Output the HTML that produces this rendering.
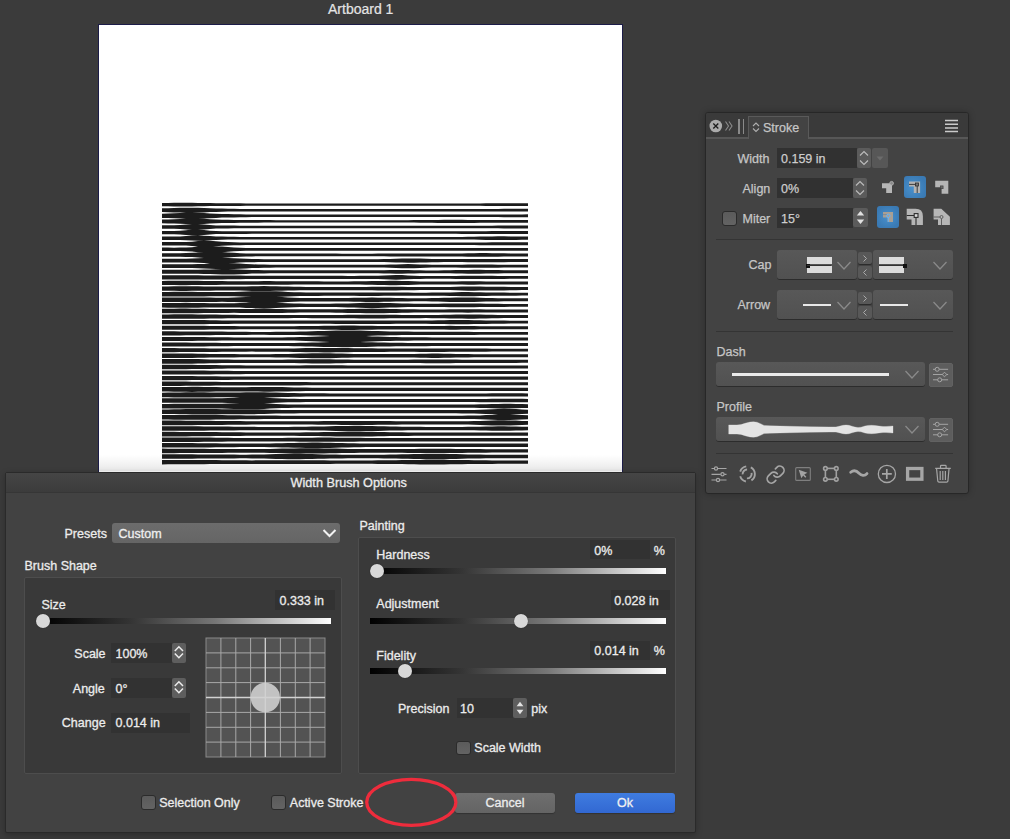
<!DOCTYPE html>
<html><head><meta charset="utf-8">
<style>
*{margin:0;padding:0;box-sizing:border-box}
html,body{width:1010px;height:839px;overflow:hidden;background:#3b3b3b;font-family:"Liberation Sans",sans-serif}
body{position:relative}
.a{position:absolute}
.t{position:absolute;white-space:nowrap;line-height:1}
.pl{font-size:12.5px;color:#c6c6c6;-webkit-text-stroke:0.25px #c6c6c6}
.dl{font-size:12.5px;color:#ececec;-webkit-text-stroke:0.3px #ececec}
.inp{position:absolute;background:#313131}
.spin{position:absolute;background:#5b5b5b;border-radius:2px}
.dd{position:absolute;background:linear-gradient(#585858,#515151);border-radius:3px;box-shadow:0 1px 0 #2c2c2c}
.sb{position:absolute;background:#585858;border-radius:2px;box-shadow:0 1px 0 #2c2c2c}
.grp{position:absolute;background:#393939;border:1px solid #4d4d4d;border-radius:2px}
.vb{position:absolute;background:#323232}
.track{position:absolute;height:6px;background:linear-gradient(90deg,#000 0%,#333 30%,#777 60%,#fff 100%)}
.thumb{position:absolute;width:14px;height:14px;border-radius:50%;background:#d8d8d8;box-shadow:0 0 1px 0 #1a1a1a}
.cb{position:absolute;width:15px;height:15px;border-radius:3px;background:linear-gradient(#5b5b5b,#636363);border:1px solid #2b2b2b}
</style></head><body>
<!-- canvas -->
<div class="t" style="left:328px;top:2px;font-size:14px;color:#e4e4e4;-webkit-text-stroke:0.2px #e4e4e4">Artboard 1</div>
<div class="a" style="left:98px;top:24px;width:525px;height:460px;background:#fff;border:1px solid #1c1c48"></div>
<svg class="a" style="left:162px;top:202px" width="367" height="264" viewBox="0 0 367 264"><path fill="#1c1c1c" d="M0 0.9 6 0.9 12 0.8 18 0.8 24 0.8 30 0.8 36 0.9 42 1.0 48 1.1 54 1.2 60 1.2 66 1.3 72 1.3 78 1.3 84 1.4 90 1.4 96 1.4 102 1.4 108 1.4 114 1.4 120 1.4 126 1.4 132 1.4 138 1.4 144 1.4 150 1.4 156 1.4 162 1.4 168 1.4 174 1.4 180 1.4 186 1.4 192 1.4 198 1.4 204 1.4 210 1.4 216 1.4 222 1.4 228 1.4 234 1.4 240 1.4 246 1.4 252 1.4 258 1.4 264 1.4 270 1.4 276 1.4 282 1.4 288 1.4 294 1.4 300 1.4 306 1.4 312 1.4 318 1.4 324 1.3 330 1.3 336 1.3 342 1.3 348 1.2 354 1.2 360 1.2 366 1.2 L366 4.0 360 4.0 354 4.0 348 4.0 342 3.9 336 3.9 330 3.9 324 3.9 318 3.8 312 3.8 306 3.8 300 3.8 294 3.8 288 3.8 282 3.8 276 3.8 270 3.8 264 3.8 258 3.8 252 3.8 246 3.8 240 3.8 234 3.8 228 3.8 222 3.8 216 3.8 210 3.8 204 3.8 198 3.8 192 3.8 186 3.8 180 3.8 174 3.8 168 3.8 162 3.8 156 3.8 150 3.8 144 3.8 138 3.8 132 3.8 126 3.8 120 3.8 114 3.8 108 3.8 102 3.8 96 3.8 90 3.8 84 3.8 78 3.9 72 3.9 66 3.9 60 4.0 54 4.0 48 4.1 42 4.2 36 4.3 30 4.4 24 4.4 18 4.4 12 4.4 6 4.3 0 4.3Z M0 6.3 6 6.2 12 6.0 18 5.8 24 5.7 30 5.7 36 5.8 42 6.0 48 6.3 54 6.5 60 6.6 66 6.7 72 6.8 78 6.9 84 6.9 90 7.0 96 7.0 102 7.0 108 7.0 114 7.0 120 7.0 126 7.0 132 7.0 138 7.0 144 7.0 150 7.0 156 7.0 162 7.0 168 7.0 174 7.0 180 7.0 186 7.0 192 7.0 198 7.0 204 7.0 210 7.0 216 7.0 222 7.0 228 7.0 234 7.0 240 7.0 246 7.0 252 7.0 258 7.0 264 7.0 270 7.0 276 7.0 282 7.0 288 7.0 294 7.0 300 7.0 306 7.0 312 7.0 318 6.9 324 6.9 330 6.9 336 6.9 342 6.8 348 6.8 354 6.8 360 6.8 366 6.7 L366 9.6 360 9.6 354 9.6 348 9.6 342 9.5 336 9.5 330 9.5 324 9.5 318 9.4 312 9.4 306 9.4 300 9.4 294 9.4 288 9.4 282 9.4 276 9.4 270 9.4 264 9.4 258 9.4 252 9.4 246 9.4 240 9.4 234 9.4 228 9.4 222 9.4 216 9.4 210 9.4 204 9.4 198 9.4 192 9.4 186 9.4 180 9.4 174 9.4 168 9.4 162 9.4 156 9.4 150 9.4 144 9.4 138 9.4 132 9.4 126 9.4 120 9.4 114 9.4 108 9.4 102 9.4 96 9.4 90 9.4 84 9.5 78 9.5 72 9.6 66 9.6 60 9.8 54 9.9 48 10.1 42 10.4 36 10.6 30 10.7 24 10.7 18 10.6 12 10.4 6 10.2 0 10.1Z M0 11.7 6 11.5 12 11.2 18 11.0 24 10.8 30 10.8 36 10.8 42 11.0 48 11.4 54 11.7 60 11.9 66 12.1 72 12.2 78 12.3 84 12.4 90 12.5 96 12.5 102 12.5 108 12.6 114 12.6 120 12.6 126 12.6 132 12.6 138 12.6 144 12.6 150 12.6 156 12.6 162 12.6 168 12.6 174 12.6 180 12.6 186 12.6 192 12.6 198 12.6 204 12.6 210 12.6 216 12.6 222 12.6 228 12.6 234 12.6 240 12.6 246 12.6 252 12.6 258 12.6 264 12.6 270 12.5 276 12.5 282 12.5 288 12.5 294 12.5 300 12.5 306 12.5 312 12.5 318 12.5 324 12.5 330 12.5 336 12.5 342 12.4 348 12.4 354 12.4 360 12.4 366 12.3 L366 15.2 360 15.2 354 15.2 348 15.2 342 15.2 336 15.1 330 15.1 324 15.1 318 15.1 312 15.1 306 15.1 300 15.1 294 15.1 288 15.1 282 15.1 276 15.1 270 15.0 264 15.0 258 15.0 252 15.0 246 15.0 240 15.0 234 15.0 228 15.0 222 15.0 216 15.0 210 15.0 204 15.0 198 15.0 192 15.0 186 15.0 180 15.0 174 15.0 168 15.0 162 15.0 156 15.0 150 15.0 144 15.0 138 15.0 132 15.0 126 15.0 120 15.0 114 15.0 108 15.0 102 15.1 96 15.1 90 15.1 84 15.2 78 15.3 72 15.4 66 15.5 60 15.6 54 15.9 48 16.2 42 16.6 36 16.8 30 16.8 24 16.8 18 16.6 12 16.3 6 16.1 0 15.9Z M0 17.5 6 17.4 12 17.3 18 17.1 24 16.7 30 16.4 36 16.4 42 16.8 48 17.3 54 17.6 60 17.7 66 17.8 72 17.9 78 18.0 84 18.1 90 18.1 96 18.1 102 18.1 108 18.1 114 18.2 120 18.2 126 18.2 132 18.2 138 18.2 144 18.2 150 18.2 156 18.2 162 18.2 168 18.2 174 18.2 180 18.2 186 18.2 192 18.2 198 18.2 204 18.2 210 18.2 216 18.2 222 18.2 228 18.2 234 18.2 240 18.2 246 18.2 252 18.1 258 18.1 264 18.1 270 18.0 276 17.9 282 17.8 288 17.8 294 17.8 300 17.8 306 17.9 312 17.9 318 18.0 324 18.0 330 18.0 336 18.0 342 18.0 348 18.0 354 18.0 360 18.0 366 17.9 L366 20.8 360 20.8 354 20.8 348 20.8 342 20.8 336 20.7 330 20.7 324 20.8 318 20.8 312 20.9 306 20.9 300 21.0 294 21.0 288 21.0 282 20.9 276 20.9 270 20.8 264 20.7 258 20.7 252 20.6 246 20.6 240 20.6 234 20.6 228 20.6 222 20.6 216 20.6 210 20.6 204 20.6 198 20.6 192 20.6 186 20.6 180 20.6 174 20.6 168 20.6 162 20.6 156 20.6 150 20.6 144 20.6 138 20.6 132 20.6 126 20.6 120 20.6 114 20.6 108 20.6 102 20.6 96 20.7 90 20.7 84 20.7 78 20.8 72 20.9 66 20.9 60 21.0 54 21.2 48 21.5 42 22.0 36 22.4 30 22.4 24 22.1 18 21.7 12 21.5 6 21.4 0 21.3Z M0 23.3 6 23.3 12 23.2 18 23.0 24 22.5 30 22.0 36 22.0 42 22.4 48 23.1 54 23.4 60 23.6 66 23.6 72 23.6 78 23.7 84 23.7 90 23.7 96 23.7 102 23.7 108 23.7 114 23.7 120 23.7 126 23.7 132 23.7 138 23.7 144 23.7 150 23.7 156 23.7 162 23.7 168 23.7 174 23.7 180 23.7 186 23.7 192 23.7 198 23.7 204 23.7 210 23.7 216 23.7 222 23.7 228 23.7 234 23.7 240 23.7 246 23.7 252 23.7 258 23.7 264 23.7 270 23.7 276 23.7 282 23.7 288 23.7 294 23.7 300 23.7 306 23.7 312 23.7 318 23.7 324 23.7 330 23.7 336 23.6 342 23.6 348 23.6 354 23.6 360 23.6 366 23.5 L366 26.4 360 26.4 354 26.4 348 26.4 342 26.4 336 26.3 330 26.3 324 26.3 318 26.3 312 26.3 306 26.3 300 26.3 294 26.3 288 26.3 282 26.3 276 26.3 270 26.3 264 26.2 258 26.2 252 26.2 246 26.2 240 26.2 234 26.2 228 26.2 222 26.2 216 26.2 210 26.2 204 26.2 198 26.2 192 26.2 186 26.2 180 26.2 174 26.2 168 26.2 162 26.2 156 26.2 150 26.2 144 26.2 138 26.2 132 26.2 126 26.2 120 26.2 114 26.2 108 26.2 102 26.2 96 26.2 90 26.2 84 26.3 78 26.3 72 26.3 66 26.4 60 26.4 54 26.6 48 26.9 42 27.6 36 28.0 30 28.0 24 27.4 18 26.9 12 26.7 6 26.7 0 26.7Z M0 28.9 6 28.9 12 28.9 18 28.7 24 28.2 30 27.6 36 27.6 42 28.0 48 28.7 54 29.0 60 29.2 66 29.2 72 29.2 78 29.3 84 29.3 90 29.3 96 29.3 102 29.3 108 29.3 114 29.3 120 29.3 126 29.3 132 29.3 138 29.3 144 29.3 150 29.3 156 29.3 162 29.3 168 29.3 174 29.3 180 29.3 186 29.3 192 29.3 198 29.3 204 29.3 210 29.3 216 29.3 222 29.3 228 29.3 234 29.3 240 29.3 246 29.3 252 29.3 258 29.3 264 29.3 270 29.3 276 29.3 282 29.3 288 29.3 294 29.3 300 29.3 306 29.3 312 29.3 318 29.2 324 29.2 330 29.1 336 29.1 342 29.1 348 29.1 354 29.1 360 29.1 366 29.1 L366 32.1 360 32.1 354 32.1 348 32.1 342 32.1 336 32.1 330 32.1 324 32.0 318 32.0 312 31.9 306 31.9 300 31.9 294 31.8 288 31.8 282 31.8 276 31.8 270 31.8 264 31.8 258 31.8 252 31.8 246 31.8 240 31.8 234 31.8 228 31.8 222 31.8 216 31.8 210 31.8 204 31.8 198 31.8 192 31.8 186 31.8 180 31.8 174 31.8 168 31.8 162 31.8 156 31.8 150 31.8 144 31.8 138 31.8 132 31.8 126 31.8 120 31.8 114 31.8 108 31.8 102 31.8 96 31.8 90 31.8 84 31.9 78 31.9 72 31.9 66 32.0 60 32.0 54 32.1 48 32.5 42 33.1 36 33.6 30 33.6 24 33.0 18 32.5 12 32.3 6 32.3 0 32.3Z M0 34.5 6 34.5 12 34.5 18 34.4 24 34.1 30 33.8 36 33.6 42 33.7 48 34.1 54 34.4 60 34.6 66 34.7 72 34.8 78 34.9 84 34.9 90 34.9 96 34.9 102 34.9 108 34.9 114 34.9 120 34.9 126 34.9 132 34.9 138 34.9 144 34.9 150 34.9 156 34.9 162 34.9 168 34.9 174 34.9 180 34.9 186 34.9 192 34.9 198 34.9 204 34.9 210 34.9 216 34.9 222 34.9 228 34.9 234 34.9 240 34.9 246 34.9 252 34.9 258 34.9 264 34.9 270 34.9 276 34.9 282 34.9 288 34.9 294 34.9 300 34.9 306 34.8 312 34.8 318 34.6 324 34.5 330 34.4 336 34.3 342 34.3 348 34.4 354 34.5 360 34.5 366 34.6 L366 37.8 360 37.8 354 37.9 348 38.0 342 38.0 336 38.0 330 38.0 324 37.9 318 37.7 312 37.6 306 37.5 300 37.5 294 37.5 288 37.5 282 37.5 276 37.5 270 37.5 264 37.5 258 37.5 252 37.5 246 37.5 240 37.5 234 37.5 228 37.5 222 37.5 216 37.5 210 37.5 204 37.5 198 37.5 192 37.5 186 37.5 180 37.5 174 37.5 168 37.5 162 37.5 156 37.5 150 37.5 144 37.5 138 37.5 132 37.5 126 37.5 120 37.5 114 37.5 108 37.5 102 37.5 96 37.5 90 37.5 84 37.5 78 37.5 72 37.6 66 37.6 60 37.7 54 38.0 48 38.3 42 38.7 36 38.8 30 38.6 24 38.2 18 38.0 12 37.9 6 37.9 0 37.9Z M0 40.0 6 40.1 12 40.1 18 40.1 24 39.9 30 39.7 36 39.1 42 38.8 48 38.8 54 39.2 60 39.8 66 40.0 72 40.2 78 40.4 84 40.4 90 40.5 96 40.5 102 40.5 108 40.5 114 40.5 120 40.5 126 40.5 132 40.5 138 40.5 144 40.5 150 40.5 156 40.5 162 40.5 168 40.5 174 40.5 180 40.5 186 40.5 192 40.5 198 40.5 204 40.5 210 40.5 216 40.5 222 40.5 228 40.5 234 40.5 240 40.5 246 40.5 252 40.5 258 40.5 264 40.5 270 40.5 276 40.5 282 40.5 288 40.5 294 40.5 300 40.5 306 40.5 312 40.5 318 40.4 324 40.4 330 40.3 336 40.3 342 40.3 348 40.3 354 40.3 360 40.3 366 40.3 L366 43.3 360 43.3 354 43.3 348 43.3 342 43.3 336 43.3 330 43.2 324 43.2 318 43.2 312 43.1 306 43.1 300 43.1 294 43.1 288 43.1 282 43.1 276 43.1 270 43.1 264 43.1 258 43.1 252 43.1 246 43.1 240 43.1 234 43.1 228 43.1 222 43.1 216 43.1 210 43.1 204 43.1 198 43.1 192 43.1 186 43.1 180 43.1 174 43.1 168 43.1 162 43.1 156 43.1 150 43.1 144 43.1 138 43.1 132 43.1 126 43.1 120 43.1 114 43.1 108 43.1 102 43.1 96 43.1 90 43.1 84 43.1 78 43.2 72 43.3 66 43.5 60 43.8 54 44.3 48 44.8 42 44.8 36 44.4 30 43.9 24 43.6 18 43.5 12 43.5 6 43.5 0 43.5Z M0 45.6 6 45.6 12 45.7 18 45.6 24 45.5 30 45.2 36 44.6 42 44.4 48 44.4 54 44.4 60 44.6 66 45.1 72 45.5 78 45.8 84 45.9 90 46.0 96 46.1 102 46.1 108 46.1 114 46.1 120 46.1 126 46.1 132 46.1 138 46.1 144 46.1 150 46.1 156 46.1 162 46.1 168 46.1 174 46.1 180 46.1 186 46.1 192 46.1 198 46.1 204 46.1 210 46.1 216 46.1 222 46.1 228 46.1 234 46.1 240 46.1 246 46.1 252 46.1 258 46.1 264 46.1 270 46.1 276 46.1 282 46.1 288 46.1 294 46.1 300 46.1 306 46.1 312 46.0 318 46.0 324 46.0 330 46.0 336 46.0 342 46.0 348 46.0 354 46.0 360 45.9 366 45.9 L366 48.8 360 48.8 354 48.8 348 48.8 342 48.8 336 48.8 330 48.8 324 48.8 318 48.8 312 48.7 306 48.7 300 48.7 294 48.7 288 48.7 282 48.7 276 48.7 270 48.7 264 48.7 258 48.7 252 48.7 246 48.7 240 48.7 234 48.7 228 48.7 222 48.7 216 48.7 210 48.7 204 48.7 198 48.7 192 48.7 186 48.7 180 48.7 174 48.7 168 48.7 162 48.7 156 48.7 150 48.7 144 48.7 138 48.7 132 48.7 126 48.7 120 48.7 114 48.7 108 48.7 102 48.7 96 48.7 90 48.7 84 48.8 78 49.0 72 49.3 66 49.7 60 50.2 54 50.4 48 50.4 42 50.4 36 50.2 30 49.6 24 49.2 18 49.1 12 49.1 6 49.1 0 49.1Z M0 51.2 6 51.2 12 51.2 18 51.2 24 51.1 30 50.8 36 50.4 42 50.0 48 50.0 54 50.0 60 50.0 66 50.4 72 50.8 78 51.2 84 51.4 90 51.6 96 51.6 102 51.6 108 51.6 114 51.6 120 51.6 126 51.6 132 51.6 138 51.6 144 51.6 150 51.6 156 51.6 162 51.6 168 51.6 174 51.6 180 51.7 186 51.7 192 51.7 198 51.7 204 51.7 210 51.7 216 51.6 222 51.6 228 51.6 234 51.5 240 51.5 246 51.5 252 51.4 258 51.5 264 51.5 270 51.5 276 51.6 282 51.6 288 51.5 294 51.5 300 51.4 306 51.3 312 51.2 318 51.1 324 51.1 330 51.2 336 51.3 342 51.3 348 51.4 354 51.5 360 51.5 366 51.5 L366 54.5 360 54.5 354 54.5 348 54.5 342 54.6 336 54.7 330 54.8 324 54.8 318 54.8 312 54.8 306 54.7 300 54.6 294 54.5 288 54.4 282 54.4 276 54.4 270 54.4 264 54.5 258 54.5 252 54.5 246 54.5 240 54.5 234 54.4 228 54.4 222 54.3 216 54.3 210 54.3 204 54.3 198 54.3 192 54.3 186 54.3 180 54.3 174 54.3 168 54.3 162 54.3 156 54.3 150 54.3 144 54.3 138 54.3 132 54.3 126 54.3 120 54.3 114 54.3 108 54.3 102 54.3 96 54.3 90 54.4 84 54.5 78 54.8 72 55.1 66 55.6 60 56.0 54 56.0 48 56.0 42 56.0 36 55.6 30 55.1 24 54.9 18 54.8 12 54.8 6 54.8 0 54.8Z M0 56.7 6 56.8 12 56.8 18 56.7 24 56.7 30 56.6 36 56.3 42 56.1 48 55.8 54 55.7 60 55.8 66 56.0 72 56.3 78 56.6 84 56.8 90 57.0 96 57.1 102 57.2 108 57.2 114 57.2 120 57.2 126 57.2 132 57.2 138 57.2 144 57.2 150 57.2 156 57.2 162 57.2 168 57.2 174 57.2 180 57.2 186 57.2 192 57.2 198 57.2 204 57.2 210 57.2 216 57.2 222 57.1 228 57.0 234 56.8 240 56.5 246 56.4 252 56.4 258 56.5 264 56.7 270 56.9 276 57.0 282 57.1 288 57.1 294 57.1 300 57.0 306 57.0 312 56.9 318 56.9 324 56.9 330 56.9 336 56.9 342 57.0 348 57.1 354 57.1 360 57.1 366 57.1 L366 60.1 360 60.1 354 60.1 348 60.1 342 60.2 336 60.2 330 60.3 324 60.3 318 60.3 312 60.2 306 60.2 300 60.1 294 60.1 288 60.1 282 60.1 276 60.2 270 60.3 264 60.5 258 60.6 252 60.7 246 60.8 240 60.6 234 60.4 228 60.2 222 60.1 216 60.0 210 60.0 204 59.9 198 59.9 192 59.9 186 59.9 180 59.9 174 60.0 168 60.0 162 60.0 156 60.0 150 60.0 144 60.0 138 60.0 132 60.0 126 60.0 120 60.0 114 60.0 108 60.0 102 60.0 96 60.1 90 60.2 84 60.3 78 60.6 72 60.9 66 61.2 60 61.4 54 61.5 48 61.4 42 61.1 36 60.8 30 60.6 24 60.5 18 60.4 12 60.4 6 60.4 0 60.4Z M0 62.3 6 62.3 12 62.3 18 62.3 24 62.3 30 62.2 36 62.1 42 61.9 48 61.6 54 61.4 60 61.2 66 61.2 72 61.3 78 61.6 84 61.9 90 62.3 96 62.5 102 62.6 108 62.7 114 62.7 120 62.7 126 62.7 132 62.7 138 62.7 144 62.7 150 62.7 156 62.7 162 62.7 168 62.8 174 62.8 180 62.8 186 62.8 192 62.8 198 62.8 204 62.8 210 62.8 216 62.8 222 62.7 228 62.6 234 62.4 240 62.2 246 62.1 252 62.2 258 62.4 264 62.6 270 62.7 276 62.8 282 62.8 288 62.7 294 62.7 300 62.7 306 62.6 312 62.6 318 62.6 324 62.6 330 62.6 336 62.7 342 62.7 348 62.7 354 62.7 360 62.7 366 62.7 L366 65.6 360 65.6 354 65.6 348 65.6 342 65.6 336 65.7 330 65.7 324 65.7 318 65.8 312 65.8 306 65.7 300 65.7 294 65.6 288 65.6 282 65.6 276 65.6 270 65.6 264 65.7 258 65.9 252 66.2 246 66.3 240 66.2 234 66.0 228 65.7 222 65.6 216 65.6 210 65.6 204 65.6 198 65.6 192 65.6 186 65.6 180 65.6 174 65.6 168 65.6 162 65.6 156 65.6 150 65.6 144 65.6 138 65.6 132 65.6 126 65.6 120 65.6 114 65.6 108 65.7 102 65.7 96 65.9 90 66.1 84 66.4 78 66.8 72 67.1 66 67.2 60 67.2 54 67.0 48 66.7 42 66.4 36 66.3 30 66.1 24 66.1 18 66.1 12 66.1 6 66.1 0 66.1Z M0 67.8 6 67.8 12 67.8 18 67.8 24 67.8 30 67.8 36 67.7 42 67.6 48 67.5 54 67.3 60 67.1 66 67.1 72 67.2 78 67.4 84 67.7 90 67.9 96 68.1 102 68.2 108 68.2 114 68.3 120 68.3 126 68.3 132 68.3 138 68.3 144 68.3 150 68.3 156 68.3 162 68.3 168 68.3 174 68.3 180 68.3 186 68.3 192 68.3 198 68.3 204 68.3 210 68.3 216 68.3 222 68.2 228 68.0 234 67.9 240 67.9 246 68.0 252 68.2 258 68.3 264 68.4 270 68.4 276 68.4 282 68.3 288 68.2 294 68.1 300 68.0 306 67.9 312 67.8 318 67.8 324 67.9 330 68.0 336 68.1 342 68.2 348 68.3 354 68.3 360 68.3 366 68.3 L366 71.2 360 71.2 354 71.2 348 71.3 342 71.3 336 71.4 330 71.5 324 71.6 318 71.7 312 71.7 306 71.7 300 71.6 294 71.4 288 71.3 282 71.2 276 71.2 270 71.2 264 71.2 258 71.2 252 71.4 246 71.5 240 71.7 234 71.7 228 71.5 222 71.4 216 71.3 210 71.2 204 71.2 198 71.2 192 71.2 186 71.2 180 71.2 174 71.3 168 71.3 162 71.3 156 71.3 150 71.3 144 71.3 138 71.3 132 71.3 126 71.3 120 71.3 114 71.3 108 71.3 102 71.4 96 71.5 90 71.6 84 71.9 78 72.2 72 72.4 66 72.5 60 72.4 54 72.2 48 72.1 42 71.9 36 71.8 30 71.8 24 71.7 18 71.7 12 71.7 6 71.7 0 71.7Z M0 73.3 6 73.3 12 73.3 18 73.3 24 73.3 30 73.3 36 73.3 42 73.4 48 73.4 54 73.4 60 73.4 66 73.4 72 73.5 78 73.6 84 73.7 90 73.7 96 73.7 102 73.8 108 73.8 114 73.8 120 73.8 126 73.8 132 73.8 138 73.8 144 73.8 150 73.8 156 73.8 162 73.8 168 73.8 174 73.8 180 73.8 186 73.9 192 73.9 198 73.8 204 73.8 210 73.8 216 73.7 222 73.5 228 73.2 234 73.1 240 73.1 246 73.4 252 73.7 258 73.9 264 74.0 270 74.0 276 74.0 282 74.0 288 73.9 294 73.9 300 73.8 306 73.7 312 73.7 318 73.7 324 73.8 330 73.8 336 73.9 342 73.9 348 73.9 354 73.9 360 73.9 366 73.9 L366 76.8 360 76.8 354 76.8 348 76.8 342 76.9 336 76.9 330 76.9 324 77.0 318 77.0 312 77.0 306 77.0 300 76.9 294 76.9 288 76.8 282 76.8 276 76.8 270 76.8 264 76.8 258 76.9 252 77.0 246 77.3 240 77.6 234 77.7 228 77.5 222 77.2 216 77.1 210 77.0 204 76.9 198 76.9 192 76.9 186 76.9 180 76.9 174 76.9 168 76.9 162 76.9 156 76.9 150 76.9 144 77.0 138 77.0 132 77.0 126 77.0 120 77.0 114 77.0 108 77.0 102 77.0 96 77.0 90 77.0 84 77.1 78 77.2 72 77.3 66 77.3 60 77.4 54 77.4 48 77.4 42 77.4 36 77.4 30 77.4 24 77.4 18 77.4 12 77.4 6 77.4 0 77.4Z M0 78.9 6 78.8 12 78.8 18 78.8 24 78.8 30 78.8 36 78.8 42 78.9 48 79.0 54 79.0 60 79.1 66 79.2 72 79.2 78 79.2 84 79.2 90 79.2 96 79.2 102 79.1 108 79.1 114 79.2 120 79.2 126 79.3 132 79.3 138 79.3 144 79.3 150 79.3 156 79.3 162 79.4 168 79.4 174 79.4 180 79.4 186 79.4 192 79.3 198 79.3 204 79.2 210 79.1 216 79.0 222 78.9 228 78.8 234 78.8 240 78.9 246 79.1 252 79.2 258 79.4 264 79.5 270 79.5 276 79.6 282 79.6 288 79.5 294 79.4 300 79.3 306 79.2 312 79.2 318 79.3 324 79.4 330 79.4 336 79.4 342 79.4 348 79.4 354 79.5 360 79.5 366 79.5 L366 82.4 360 82.4 354 82.5 348 82.5 342 82.5 336 82.6 330 82.6 324 82.6 318 82.6 312 82.7 306 82.7 300 82.6 294 82.5 288 82.4 282 82.4 276 82.4 270 82.4 264 82.5 258 82.6 252 82.7 246 82.9 240 83.1 234 83.2 228 83.2 222 83.1 216 82.9 210 82.8 204 82.7 198 82.6 192 82.6 186 82.6 180 82.6 174 82.6 168 82.6 162 82.6 156 82.6 150 82.6 144 82.6 138 82.6 132 82.6 126 82.7 120 82.7 114 82.8 108 82.8 102 82.8 96 82.8 90 82.8 84 82.7 78 82.7 72 82.8 66 82.8 60 82.8 54 82.9 48 83.0 42 83.0 36 83.1 30 83.1 24 83.2 18 83.2 12 83.1 6 83.1 0 83.1Z M0 84.4 6 84.4 12 84.3 18 84.3 24 84.3 30 84.3 36 84.3 42 84.4 48 84.5 54 84.5 60 84.6 66 84.6 72 84.6 78 84.5 84 84.4 90 84.3 96 84.2 102 84.1 108 84.2 114 84.3 120 84.5 126 84.6 132 84.7 138 84.8 144 84.9 150 84.9 156 84.9 162 84.9 168 84.9 174 84.9 180 84.9 186 84.9 192 84.9 198 84.9 204 84.9 210 84.8 216 84.8 222 84.7 228 84.7 234 84.8 240 84.8 246 84.9 252 85.0 258 85.0 264 85.1 270 85.1 276 85.1 282 85.1 288 85.0 294 84.8 300 84.5 306 84.4 312 84.4 318 84.6 324 84.7 330 84.7 336 84.7 342 84.8 348 84.9 354 85.0 360 85.0 366 85.1 L366 88.1 360 88.1 354 88.2 348 88.3 342 88.4 336 88.4 330 88.5 324 88.5 318 88.6 312 88.7 306 88.8 300 88.6 294 88.3 288 88.1 282 88.0 276 88.0 270 88.0 264 88.0 258 88.1 252 88.2 246 88.2 240 88.3 234 88.4 228 88.4 222 88.4 216 88.4 210 88.3 204 88.3 198 88.2 192 88.2 186 88.2 180 88.2 174 88.2 168 88.2 162 88.2 156 88.2 150 88.3 144 88.3 138 88.3 132 88.4 126 88.5 120 88.7 114 88.8 108 89.0 102 89.0 96 89.0 90 88.9 84 88.7 78 88.6 72 88.5 66 88.5 60 88.5 54 88.6 48 88.7 42 88.7 36 88.8 30 88.8 24 88.9 18 88.9 12 88.8 6 88.8 0 88.7Z M0 89.9 6 89.9 12 89.8 18 89.8 24 89.8 30 89.8 36 89.9 42 89.9 48 90.0 54 90.1 60 90.1 66 90.1 72 90.0 78 89.8 84 89.5 90 89.2 96 89.2 102 89.2 108 89.2 114 89.3 120 89.6 126 89.9 132 90.2 138 90.3 144 90.4 150 90.5 156 90.5 162 90.5 168 90.5 174 90.5 180 90.5 186 90.5 192 90.5 198 90.5 204 90.5 210 90.5 216 90.5 222 90.5 228 90.5 234 90.6 240 90.6 246 90.6 252 90.7 258 90.7 264 90.7 270 90.6 276 90.6 282 90.5 288 90.4 294 90.2 300 90.1 306 90.1 312 90.2 318 90.3 324 90.4 330 90.5 336 90.6 342 90.6 348 90.7 354 90.7 360 90.7 366 90.7 L366 93.6 360 93.6 354 93.7 348 93.7 342 93.7 336 93.8 330 93.8 324 93.9 318 94.0 312 94.2 306 94.3 300 94.2 294 94.1 288 94.0 282 93.8 276 93.8 270 93.7 264 93.7 258 93.7 252 93.7 246 93.7 240 93.7 234 93.8 228 93.8 222 93.8 216 93.9 210 93.9 204 93.9 198 93.9 192 93.8 186 93.8 180 93.8 174 93.8 168 93.8 162 93.8 156 93.9 150 93.9 144 93.9 138 94.0 132 94.2 126 94.4 120 94.7 114 95.1 108 95.2 102 95.2 96 95.2 90 95.1 84 94.8 78 94.5 72 94.3 66 94.2 60 94.2 54 94.3 48 94.3 42 94.4 36 94.5 30 94.5 24 94.5 18 94.5 12 94.5 6 94.4 0 94.4Z M0 95.5 6 95.5 12 95.4 18 95.4 24 95.4 30 95.4 36 95.4 42 95.5 48 95.6 54 95.7 60 95.7 66 95.7 72 95.5 78 95.3 84 94.9 90 94.8 96 94.8 102 94.8 108 94.8 114 94.8 120 95.1 126 95.4 132 95.7 138 95.9 144 96.0 150 96.1 156 96.1 162 96.1 168 96.1 174 96.0 180 96.0 186 95.9 192 95.8 198 95.7 204 95.7 210 95.6 216 95.7 222 95.7 228 95.8 234 96.0 240 96.1 246 96.2 252 96.2 258 96.2 264 96.2 270 96.1 276 96.0 282 95.8 288 95.7 294 95.5 300 95.4 306 95.5 312 95.6 318 95.7 324 95.9 330 96.1 336 96.2 342 96.2 348 96.3 354 96.3 360 96.3 366 96.3 L366 99.2 360 99.2 354 99.2 348 99.2 342 99.3 336 99.4 330 99.5 324 99.6 318 99.8 312 100.0 306 100.1 300 100.1 294 100.0 288 99.9 282 99.7 276 99.5 270 99.4 264 99.3 258 99.3 252 99.3 246 99.4 240 99.5 234 99.6 228 99.7 222 99.8 216 99.9 210 99.9 204 99.9 198 99.8 192 99.7 186 99.6 180 99.5 174 99.5 168 99.5 162 99.5 156 99.5 150 99.5 144 99.5 138 99.6 132 99.8 126 100.1 120 100.5 114 100.8 108 100.8 102 100.8 96 100.8 90 100.8 84 100.6 78 100.3 72 100.0 66 99.9 60 99.8 54 99.9 48 99.9 42 100.0 36 100.1 30 100.1 24 100.2 18 100.1 12 100.1 6 100.1 0 100.0Z M0 101.1 6 101.1 12 101.0 18 101.0 24 101.0 30 101.0 36 101.1 42 101.1 48 101.2 54 101.3 60 101.3 66 101.3 72 101.3 78 101.1 84 100.9 90 100.6 96 100.4 102 100.4 108 100.5 114 100.7 120 101.0 126 101.3 132 101.5 138 101.6 144 101.7 150 101.7 156 101.7 162 101.7 168 101.7 174 101.6 180 101.5 186 101.4 192 101.2 198 101.0 204 100.8 210 100.8 216 100.8 222 100.9 228 101.1 234 101.3 240 101.5 246 101.6 252 101.7 258 101.8 264 101.8 270 101.8 276 101.7 282 101.6 288 101.5 294 101.5 300 101.4 306 101.4 312 101.5 318 101.6 324 101.7 330 101.8 336 101.8 342 101.9 348 101.9 354 101.9 360 101.9 366 101.9 L366 104.8 360 104.8 354 104.8 348 104.8 342 104.9 336 104.9 330 105.0 324 105.0 318 105.1 312 105.2 306 105.3 300 105.3 294 105.3 288 105.2 282 105.1 276 105.0 270 105.0 264 104.9 258 104.9 252 105.0 246 105.1 240 105.2 234 105.4 228 105.6 222 105.8 216 105.9 210 106.0 204 105.9 198 105.7 192 105.6 186 105.4 180 105.2 174 105.1 168 105.1 162 105.0 156 105.0 150 105.0 144 105.1 138 105.1 132 105.3 126 105.5 120 105.7 114 106.0 108 106.3 102 106.4 96 106.3 90 106.1 84 105.9 78 105.6 72 105.5 66 105.4 60 105.4 54 105.4 48 105.5 42 105.6 36 105.7 30 105.7 24 105.7 18 105.7 12 105.7 6 105.7 0 105.6Z M0 106.7 6 106.7 12 106.7 18 106.6 24 106.6 30 106.7 36 106.7 42 106.8 48 106.9 54 106.9 60 107.0 66 107.1 72 107.1 78 107.1 84 107.0 90 106.9 96 106.8 102 106.8 108 106.8 114 106.9 120 107.1 126 107.2 132 107.3 138 107.3 144 107.3 150 107.3 156 107.3 162 107.3 168 107.3 174 107.2 180 107.2 186 107.1 192 106.9 198 106.8 204 106.7 210 106.6 216 106.7 222 106.8 228 106.9 234 107.0 240 107.2 246 107.3 252 107.3 258 107.4 264 107.4 270 107.4 276 107.4 282 107.4 288 107.3 294 107.3 300 107.3 306 107.3 312 107.3 318 107.3 324 107.4 330 107.4 336 107.5 342 107.5 348 107.5 354 107.5 360 107.5 366 107.5 L366 110.4 360 110.4 354 110.4 348 110.4 342 110.4 336 110.5 330 110.5 324 110.6 318 110.6 312 110.6 306 110.7 300 110.6 294 110.6 288 110.6 282 110.5 276 110.5 270 110.5 264 110.5 258 110.5 252 110.6 246 110.7 240 110.8 234 110.9 228 111.0 222 111.2 216 111.3 210 111.3 204 111.2 198 111.1 192 111.0 186 110.9 180 110.8 174 110.7 168 110.6 162 110.6 156 110.6 150 110.6 144 110.6 138 110.6 132 110.7 126 110.8 120 110.9 114 111.0 108 111.1 102 111.1 96 111.1 90 111.0 84 110.9 78 110.9 72 110.8 66 110.9 60 110.9 54 111.0 48 111.1 42 111.1 36 111.2 30 111.3 24 111.3 18 111.3 12 111.3 6 111.2 0 111.2Z M0 112.4 6 112.4 12 112.3 18 112.3 24 112.3 30 112.3 36 112.4 42 112.5 48 112.5 54 112.6 60 112.7 66 112.8 72 112.8 78 112.9 84 112.9 90 112.9 96 112.9 102 112.9 108 112.9 114 112.9 120 112.9 126 113.0 132 113.0 138 113.0 144 113.0 150 113.0 156 113.0 162 112.9 168 112.9 174 112.9 180 112.9 186 112.8 192 112.8 198 112.8 204 112.7 210 112.7 216 112.7 222 112.8 228 112.8 234 112.8 240 112.9 246 112.9 252 112.9 258 113.0 264 113.0 270 113.0 276 112.9 282 112.8 288 112.7 294 112.6 300 112.5 306 112.4 312 112.5 318 112.5 324 112.7 330 112.8 336 112.9 342 113.0 348 113.1 354 113.1 360 113.1 366 113.1 L366 116.0 360 116.0 354 116.0 348 116.1 342 116.1 336 116.2 330 116.3 324 116.4 318 116.6 312 116.7 306 116.7 300 116.6 294 116.5 288 116.4 282 116.3 276 116.2 270 116.2 264 116.1 258 116.2 252 116.2 246 116.2 240 116.2 234 116.3 228 116.3 222 116.4 216 116.4 210 116.4 204 116.4 198 116.4 192 116.3 186 116.3 180 116.2 174 116.2 168 116.2 162 116.2 156 116.2 150 116.2 144 116.1 138 116.1 132 116.1 126 116.2 120 116.2 114 116.2 108 116.2 102 116.2 96 116.2 90 116.2 84 116.2 78 116.3 72 116.3 66 116.3 60 116.4 54 116.5 48 116.6 42 116.7 36 116.7 30 116.8 24 116.8 18 116.8 12 116.8 6 116.8 0 116.7Z M0 118.0 6 118.0 12 118.0 18 118.0 24 118.0 30 118.0 36 118.1 42 118.1 48 118.2 54 118.3 60 118.4 66 118.4 72 118.5 78 118.6 84 118.6 90 118.6 96 118.6 102 118.6 108 118.6 114 118.6 120 118.6 126 118.6 132 118.6 138 118.6 144 118.6 150 118.6 156 118.5 162 118.5 168 118.5 174 118.5 180 118.4 186 118.4 192 118.4 198 118.4 204 118.4 210 118.4 216 118.4 222 118.4 228 118.5 234 118.5 240 118.5 246 118.5 252 118.5 258 118.5 264 118.5 270 118.5 276 118.3 282 118.2 288 118.1 294 118.0 300 118.0 306 118.1 312 118.2 318 118.3 324 118.4 330 118.5 336 118.6 342 118.6 348 118.7 354 118.7 360 118.7 366 118.7 L366 121.6 360 121.6 354 121.6 348 121.6 342 121.7 336 121.7 330 121.8 324 121.9 318 122.0 312 122.1 306 122.2 300 122.3 294 122.3 288 122.2 282 122.1 276 122.0 270 121.9 264 121.8 258 121.8 252 121.8 246 121.8 240 121.8 234 121.8 228 121.9 222 121.9 216 121.9 210 121.9 204 121.9 198 121.9 192 121.9 186 121.9 180 121.9 174 121.9 168 121.8 162 121.8 156 121.8 150 121.8 144 121.7 138 121.7 132 121.7 126 121.7 120 121.7 114 121.7 108 121.7 102 121.7 96 121.7 90 121.7 84 121.7 78 121.8 72 121.8 66 121.9 60 122.0 54 122.0 48 122.1 42 122.2 36 122.2 30 122.3 24 122.3 18 122.3 12 122.3 6 122.3 0 122.3Z M0 123.7 6 123.7 12 123.7 18 123.7 24 123.7 30 123.7 36 123.8 42 123.8 48 123.9 54 123.9 60 124.0 66 124.1 72 124.1 78 124.2 84 124.2 90 124.3 96 124.3 102 124.3 108 124.3 114 124.2 120 124.2 126 124.2 132 124.2 138 124.1 144 124.1 150 124.0 156 123.9 162 123.8 168 123.8 174 123.7 180 123.6 186 123.6 192 123.6 198 123.7 204 123.7 210 123.8 216 123.9 222 123.9 228 124.0 234 124.0 240 124.1 246 124.1 252 124.1 258 124.1 264 124.1 270 124.1 276 124.0 282 123.9 288 123.8 294 123.9 300 123.9 306 124.0 312 124.1 318 124.2 324 124.2 330 124.3 336 124.3 342 124.3 348 124.3 354 124.3 360 124.3 366 124.3 L366 127.2 360 127.2 354 127.2 348 127.2 342 127.2 336 127.2 330 127.2 324 127.3 318 127.3 312 127.4 306 127.5 300 127.6 294 127.7 288 127.7 282 127.6 276 127.5 270 127.5 264 127.4 258 127.4 252 127.4 246 127.4 240 127.5 234 127.5 228 127.5 222 127.6 216 127.6 210 127.7 204 127.8 198 127.8 192 127.9 186 127.9 180 127.9 174 127.8 168 127.8 162 127.7 156 127.6 150 127.5 144 127.4 138 127.4 132 127.3 126 127.3 120 127.3 114 127.3 108 127.3 102 127.2 96 127.2 90 127.3 84 127.3 78 127.3 72 127.4 66 127.4 60 127.5 54 127.6 48 127.6 42 127.7 36 127.7 30 127.8 24 127.8 18 127.8 12 127.8 6 127.8 0 127.8Z M0 129.3 6 129.3 12 129.3 18 129.4 24 129.4 30 129.4 36 129.4 42 129.5 48 129.5 54 129.6 60 129.6 66 129.7 72 129.7 78 129.8 84 129.8 90 129.9 96 129.9 102 129.9 108 129.9 114 129.8 120 129.8 126 129.8 132 129.7 138 129.6 144 129.5 150 129.3 156 129.1 162 128.9 168 128.7 174 128.5 180 128.4 186 128.4 192 128.5 198 128.6 204 128.8 210 129.0 216 129.1 222 129.3 228 129.4 234 129.5 240 129.6 246 129.6 252 129.7 258 129.7 264 129.7 270 129.8 276 129.8 282 129.8 288 129.8 294 129.8 300 129.8 306 129.8 312 129.9 318 129.9 324 129.9 330 129.9 336 129.9 342 129.9 348 129.9 354 129.9 360 129.9 366 129.9 L366 132.8 360 132.8 354 132.8 348 132.8 342 132.8 336 132.8 330 132.8 324 132.8 318 132.8 312 132.9 306 132.9 300 132.9 294 132.9 288 132.9 282 132.9 276 132.9 270 133.0 264 133.0 258 133.0 252 133.0 246 133.1 240 133.1 234 133.2 228 133.3 222 133.4 216 133.6 210 133.7 204 133.9 198 134.1 192 134.2 186 134.3 180 134.3 174 134.2 168 134.0 162 133.8 156 133.6 150 133.4 144 133.2 138 133.1 132 133.0 126 132.9 120 132.9 114 132.9 108 132.9 102 132.8 96 132.8 90 132.8 84 132.9 78 132.9 72 133.0 66 133.0 60 133.1 54 133.1 48 133.2 42 133.2 36 133.3 30 133.3 24 133.3 18 133.4 12 133.4 6 133.4 0 133.4Z M0 135.0 6 135.0 12 135.0 18 135.0 24 135.0 30 135.1 36 135.1 42 135.1 48 135.2 54 135.2 60 135.3 66 135.3 72 135.4 78 135.4 84 135.4 90 135.5 96 135.5 102 135.5 108 135.5 114 135.4 120 135.4 126 135.3 132 135.3 138 135.1 144 135.0 150 134.7 156 134.5 162 134.2 168 134.0 174 134.0 180 134.0 186 134.0 192 134.0 198 134.0 204 134.1 210 134.4 216 134.6 222 134.8 228 135.0 234 135.1 240 135.2 246 135.2 252 135.3 258 135.3 264 135.3 270 135.4 276 135.4 282 135.4 288 135.4 294 135.4 300 135.4 306 135.4 312 135.5 318 135.5 324 135.5 330 135.5 336 135.5 342 135.5 348 135.5 354 135.5 360 135.5 366 135.5 L366 138.4 360 138.4 354 138.4 348 138.4 342 138.4 336 138.4 330 138.4 324 138.4 318 138.4 312 138.5 306 138.5 300 138.5 294 138.5 288 138.5 282 138.5 276 138.5 270 138.5 264 138.6 258 138.6 252 138.6 246 138.7 240 138.7 234 138.8 228 138.9 222 139.1 216 139.3 210 139.5 204 139.8 198 140.0 192 140.0 186 140.0 180 140.0 174 140.0 168 139.9 162 139.7 156 139.4 150 139.2 144 138.9 138 138.8 132 138.6 126 138.6 120 138.5 114 138.5 108 138.5 102 138.4 96 138.4 90 138.4 84 138.5 78 138.5 72 138.5 66 138.6 60 138.6 54 138.7 48 138.7 42 138.8 36 138.8 30 138.9 24 138.9 18 138.9 12 138.9 6 138.9 0 139.0Z M0 140.6 6 140.6 12 140.6 18 140.6 24 140.6 30 140.7 36 140.7 42 140.7 48 140.8 54 140.8 60 140.9 66 140.9 72 141.0 78 141.0 84 141.0 90 141.1 96 141.1 102 141.1 108 141.0 114 141.0 120 141.0 126 141.0 132 140.9 138 140.8 144 140.7 150 140.5 156 140.4 162 140.2 168 140.1 174 140.0 180 139.9 186 139.9 192 140.0 198 140.1 204 140.2 210 140.3 216 140.5 222 140.6 228 140.7 234 140.8 240 140.8 246 140.9 252 140.9 258 140.9 264 140.9 270 141.0 276 141.0 282 141.0 288 141.0 294 141.0 300 141.0 306 141.0 312 141.0 318 141.1 324 141.1 330 141.1 336 141.1 342 141.1 348 141.1 354 141.1 360 141.1 366 141.1 L366 144.0 360 144.0 354 144.0 348 144.0 342 144.0 336 144.0 330 144.0 324 144.0 318 144.0 312 144.1 306 144.1 300 144.1 294 144.1 288 144.1 282 144.1 276 144.1 270 144.1 264 144.2 258 144.2 252 144.2 246 144.2 240 144.3 234 144.3 228 144.4 222 144.5 216 144.6 210 144.8 204 144.9 198 145.0 192 145.1 186 145.2 180 145.2 174 145.1 168 145.0 162 144.9 156 144.7 150 144.6 144 144.4 138 144.3 132 144.2 126 144.1 120 144.1 114 144.1 108 144.1 102 144.0 96 144.0 90 144.0 84 144.1 78 144.1 72 144.1 66 144.2 60 144.2 54 144.3 48 144.3 42 144.4 36 144.4 30 144.4 24 144.5 18 144.5 12 144.5 6 144.5 0 144.5Z M0 146.1 6 146.1 12 146.1 18 146.2 24 146.2 30 146.2 36 146.3 42 146.3 48 146.4 54 146.4 60 146.5 66 146.5 72 146.5 78 146.6 84 146.6 90 146.6 96 146.6 102 146.6 108 146.6 114 146.6 120 146.5 126 146.5 132 146.4 138 146.2 144 146.1 150 146.0 156 145.9 162 145.9 168 145.9 174 146.0 180 146.0 186 146.1 192 146.2 198 146.2 204 146.3 210 146.3 216 146.4 222 146.4 228 146.5 234 146.5 240 146.5 246 146.5 252 146.5 258 146.4 264 146.4 270 146.4 276 146.4 282 146.4 288 146.5 294 146.5 300 146.6 306 146.6 312 146.6 318 146.6 324 146.6 330 146.7 336 146.7 342 146.7 348 146.7 354 146.7 360 146.7 366 146.7 L366 149.6 360 149.6 354 149.6 348 149.6 342 149.6 336 149.6 330 149.6 324 149.7 318 149.7 312 149.7 306 149.7 300 149.7 294 149.8 288 149.8 282 149.9 276 149.9 270 149.9 264 149.9 258 149.9 252 149.8 246 149.8 240 149.8 234 149.8 228 149.8 222 149.9 216 149.9 210 149.9 204 150.0 198 150.1 192 150.1 186 150.2 180 150.3 174 150.3 168 150.4 162 150.4 156 150.3 150 150.3 144 150.2 138 150.1 132 149.9 126 149.8 120 149.8 114 149.7 108 149.7 102 149.7 96 149.7 90 149.6 84 149.7 78 149.7 72 149.7 66 149.8 60 149.8 54 149.9 48 149.9 42 150.0 36 150.0 30 150.1 24 150.1 18 150.1 12 150.2 6 150.2 0 150.2Z M0 151.5 6 151.5 12 151.5 18 151.5 24 151.5 30 151.6 36 151.7 42 151.8 48 151.9 54 151.9 60 152.0 66 152.1 72 152.1 78 152.2 84 152.2 90 152.2 96 152.2 102 152.2 108 152.2 114 152.1 120 152.0 126 151.9 132 151.7 138 151.6 144 151.4 150 151.2 156 151.2 162 151.2 168 151.3 174 151.5 180 151.6 186 151.8 192 151.9 198 152.0 204 152.1 210 152.1 216 152.1 222 152.1 228 152.1 234 152.1 240 152.0 246 152.0 252 151.9 258 151.8 264 151.7 270 151.6 276 151.6 282 151.7 288 151.8 294 151.9 300 152.0 306 152.1 312 152.2 318 152.2 324 152.2 330 152.2 336 152.2 342 152.2 348 152.2 354 152.2 360 152.3 366 152.3 L366 155.2 360 155.2 354 155.2 348 155.2 342 155.2 336 155.2 330 155.3 324 155.3 318 155.3 312 155.3 306 155.4 300 155.5 294 155.6 288 155.7 282 155.8 276 155.9 270 155.9 264 155.8 258 155.7 252 155.6 246 155.5 240 155.4 234 155.4 228 155.4 222 155.4 216 155.4 210 155.4 204 155.4 198 155.5 192 155.6 186 155.7 180 155.8 174 156.0 168 156.2 162 156.3 156 156.3 150 156.3 144 156.1 138 155.9 132 155.7 126 155.6 120 155.4 114 155.4 108 155.3 102 155.3 96 155.3 90 155.3 84 155.3 78 155.3 72 155.4 66 155.4 60 155.5 54 155.5 48 155.6 42 155.7 36 155.8 30 155.9 24 156.0 18 156.0 12 156.0 6 156.0 0 156.0Z M0 157.0 6 156.9 12 156.9 18 156.9 24 156.9 30 157.0 36 157.1 42 157.3 48 157.4 54 157.5 60 157.6 66 157.6 72 157.7 78 157.8 84 157.8 90 157.8 96 157.8 102 157.8 108 157.8 114 157.8 120 157.7 126 157.6 132 157.6 138 157.4 144 157.3 150 157.3 156 157.2 162 157.3 168 157.3 174 157.4 180 157.5 186 157.6 192 157.7 198 157.7 204 157.7 210 157.7 216 157.7 222 157.7 228 157.7 234 157.7 240 157.7 246 157.7 252 157.6 258 157.5 264 157.5 270 157.4 276 157.4 282 157.5 288 157.5 294 157.6 300 157.7 306 157.7 312 157.8 318 157.8 324 157.8 330 157.8 336 157.8 342 157.8 348 157.8 354 157.8 360 157.8 366 157.8 L366 160.8 360 160.8 354 160.9 348 160.9 342 160.9 336 160.9 330 160.9 324 160.9 318 160.9 312 160.9 306 161.0 300 161.0 294 161.1 288 161.2 282 161.2 276 161.2 270 161.2 264 161.2 258 161.1 252 161.1 246 161.0 240 161.0 234 161.0 228 160.9 222 160.9 216 160.9 210 160.9 204 161.0 198 161.0 192 161.0 186 161.1 180 161.2 174 161.3 168 161.4 162 161.4 156 161.4 150 161.4 144 161.3 138 161.2 132 161.1 126 161.0 120 161.0 114 160.9 108 160.9 102 160.9 96 160.9 90 160.9 84 160.9 78 160.9 72 161.0 66 161.0 60 161.1 54 161.2 48 161.3 42 161.4 36 161.5 30 161.7 24 161.7 18 161.8 12 161.8 6 161.8 0 161.7Z M0 162.7 6 162.7 12 162.7 18 162.7 24 162.7 30 162.8 36 162.9 42 162.9 48 163.0 54 163.1 60 163.2 66 163.2 72 163.3 78 163.3 84 163.4 90 163.4 96 163.4 102 163.4 108 163.4 114 163.4 120 163.4 126 163.4 132 163.4 138 163.4 144 163.3 150 163.3 156 163.3 162 163.3 168 163.3 174 163.3 180 163.3 186 163.4 192 163.4 198 163.4 204 163.4 210 163.4 216 163.4 222 163.4 228 163.4 234 163.4 240 163.4 246 163.4 252 163.4 258 163.4 264 163.4 270 163.4 276 163.4 282 163.4 288 163.4 294 163.4 300 163.4 306 163.4 312 163.4 318 163.4 324 163.4 330 163.4 336 163.4 342 163.4 348 163.4 354 163.4 360 163.4 366 163.4 L366 166.5 360 166.5 354 166.5 348 166.5 342 166.5 336 166.5 330 166.5 324 166.5 318 166.5 312 166.5 306 166.5 300 166.5 294 166.5 288 166.5 282 166.5 276 166.5 270 166.5 264 166.5 258 166.5 252 166.5 246 166.5 240 166.5 234 166.5 228 166.5 222 166.5 216 166.5 210 166.5 204 166.5 198 166.5 192 166.5 186 166.5 180 166.5 174 166.6 168 166.6 162 166.6 156 166.6 150 166.6 144 166.5 138 166.5 132 166.5 126 166.5 120 166.5 114 166.5 108 166.5 102 166.5 96 166.5 90 166.5 84 166.5 78 166.5 72 166.6 66 166.6 60 166.7 54 166.8 48 166.9 42 166.9 36 167.0 30 167.1 24 167.2 18 167.2 12 167.2 6 167.2 0 167.2Z M0 168.4 6 168.4 12 168.5 18 168.5 24 168.5 30 168.5 36 168.6 42 168.6 48 168.7 54 168.7 60 168.8 66 168.8 72 168.9 78 168.9 84 169.0 90 169.0 96 169.0 102 169.0 108 169.0 114 169.0 120 169.0 126 169.0 132 169.0 138 169.0 144 169.0 150 169.0 156 169.0 162 169.0 168 169.0 174 169.0 180 169.0 186 169.0 192 169.0 198 169.0 204 169.0 210 169.0 216 169.0 222 169.0 228 169.0 234 169.0 240 169.0 246 169.0 252 169.0 258 169.0 264 169.0 270 169.0 276 169.0 282 169.0 288 169.0 294 169.0 300 169.0 306 169.0 312 169.0 318 169.0 324 169.0 330 169.0 336 169.0 342 169.0 348 169.0 354 169.0 360 169.0 366 169.0 L366 172.1 360 172.1 354 172.1 348 172.1 342 172.1 336 172.1 330 172.1 324 172.1 318 172.1 312 172.1 306 172.1 300 172.1 294 172.1 288 172.1 282 172.1 276 172.1 270 172.1 264 172.1 258 172.1 252 172.1 246 172.1 240 172.1 234 172.1 228 172.1 222 172.1 216 172.1 210 172.1 204 172.1 198 172.1 192 172.1 186 172.1 180 172.1 174 172.1 168 172.1 162 172.1 156 172.1 150 172.1 144 172.1 138 172.1 132 172.1 126 172.1 120 172.1 114 172.1 108 172.1 102 172.1 96 172.1 90 172.1 84 172.1 78 172.2 72 172.2 66 172.2 60 172.3 54 172.3 48 172.4 42 172.4 36 172.5 30 172.5 24 172.6 18 172.6 12 172.6 6 172.6 0 172.6Z M0 174.0 6 174.1 12 174.1 18 174.1 24 174.1 30 174.1 36 174.2 42 174.2 48 174.3 54 174.3 60 174.4 66 174.4 72 174.5 78 174.5 84 174.5 90 174.6 96 174.6 102 174.6 108 174.6 114 174.6 120 174.6 126 174.6 132 174.6 138 174.6 144 174.6 150 174.6 156 174.6 162 174.6 168 174.6 174 174.6 180 174.6 186 174.6 192 174.6 198 174.6 204 174.6 210 174.6 216 174.6 222 174.6 228 174.6 234 174.6 240 174.6 246 174.6 252 174.6 258 174.6 264 174.6 270 174.6 276 174.6 282 174.6 288 174.6 294 174.6 300 174.6 306 174.6 312 174.6 318 174.6 324 174.6 330 174.6 336 174.6 342 174.6 348 174.6 354 174.6 360 174.6 366 174.6 L366 177.7 360 177.7 354 177.7 348 177.7 342 177.7 336 177.7 330 177.7 324 177.7 318 177.7 312 177.7 306 177.7 300 177.7 294 177.7 288 177.7 282 177.7 276 177.7 270 177.7 264 177.7 258 177.7 252 177.7 246 177.7 240 177.7 234 177.7 228 177.7 222 177.7 216 177.7 210 177.7 204 177.7 198 177.7 192 177.7 186 177.7 180 177.7 174 177.7 168 177.7 162 177.7 156 177.7 150 177.7 144 177.7 138 177.7 132 177.7 126 177.7 120 177.7 114 177.7 108 177.7 102 177.7 96 177.7 90 177.7 84 177.7 78 177.8 72 177.8 66 177.9 60 177.9 54 178.0 48 178.0 42 178.1 36 178.1 30 178.1 24 178.2 18 178.2 12 178.2 6 178.2 0 178.2Z M0 179.6 6 179.6 12 179.6 18 179.6 24 179.6 30 179.7 36 179.7 42 179.7 48 179.8 54 179.8 60 179.9 66 179.9 72 180.0 78 180.0 84 180.0 90 180.0 96 180.0 102 180.0 108 180.0 114 180.0 120 180.0 126 180.1 132 180.1 138 180.1 144 180.1 150 180.2 156 180.2 162 180.2 168 180.2 174 180.2 180 180.2 186 180.2 192 180.2 198 180.2 204 180.2 210 180.2 216 180.2 222 180.2 228 180.2 234 180.2 240 180.2 246 180.2 252 180.2 258 180.2 264 180.2 270 180.2 276 180.2 282 180.2 288 180.2 294 180.2 300 180.2 306 180.2 312 180.2 318 180.2 324 180.2 330 180.2 336 180.2 342 180.2 348 180.2 354 180.2 360 180.2 366 180.2 L366 183.3 360 183.3 354 183.3 348 183.3 342 183.3 336 183.3 330 183.3 324 183.3 318 183.3 312 183.3 306 183.3 300 183.3 294 183.3 288 183.3 282 183.3 276 183.3 270 183.3 264 183.3 258 183.3 252 183.3 246 183.3 240 183.3 234 183.3 228 183.3 222 183.3 216 183.3 210 183.3 204 183.3 198 183.3 192 183.3 186 183.3 180 183.3 174 183.3 168 183.3 162 183.3 156 183.3 150 183.3 144 183.3 138 183.4 132 183.4 126 183.4 120 183.4 114 183.5 108 183.5 102 183.5 96 183.5 90 183.4 84 183.4 78 183.5 72 183.5 66 183.5 60 183.6 54 183.6 48 183.7 42 183.7 36 183.8 30 183.8 24 183.8 18 183.9 12 183.9 6 183.9 0 183.9Z M0 185.1 6 185.1 12 185.0 18 184.9 24 184.9 30 184.8 36 184.8 42 184.9 48 185.0 54 185.1 60 185.2 66 185.3 72 185.3 78 185.3 84 185.2 90 185.1 96 185.0 102 185.0 108 185.0 114 185.0 120 185.1 126 185.2 132 185.4 138 185.5 144 185.6 150 185.7 156 185.7 162 185.7 168 185.8 174 185.8 180 185.8 186 185.8 192 185.8 198 185.8 204 185.8 210 185.8 216 185.8 222 185.8 228 185.8 234 185.8 240 185.8 246 185.8 252 185.8 258 185.8 264 185.8 270 185.8 276 185.8 282 185.8 288 185.8 294 185.8 300 185.8 306 185.8 312 185.8 318 185.8 324 185.8 330 185.8 336 185.8 342 185.8 348 185.8 354 185.8 360 185.8 366 185.8 L366 188.9 360 188.9 354 188.9 348 188.9 342 188.9 336 188.9 330 188.9 324 188.9 318 188.9 312 188.9 306 188.9 300 188.9 294 188.9 288 188.9 282 188.9 276 188.9 270 188.9 264 188.9 258 188.9 252 188.9 246 188.9 240 188.9 234 188.9 228 188.9 222 188.9 216 188.9 210 188.9 204 188.9 198 188.9 192 188.9 186 188.9 180 188.9 174 188.9 168 188.9 162 188.9 156 188.9 150 189.0 144 189.1 138 189.2 132 189.3 126 189.4 120 189.5 114 189.6 108 189.7 102 189.7 96 189.6 90 189.5 84 189.5 78 189.4 72 189.4 66 189.4 60 189.4 54 189.5 48 189.7 42 189.8 36 189.8 30 189.9 24 189.8 18 189.7 12 189.7 6 189.6 0 189.6Z M0 190.7 6 190.6 12 190.5 18 190.4 24 190.3 30 190.2 36 190.2 42 190.3 48 190.4 54 190.5 60 190.6 66 190.6 72 190.5 78 190.4 84 190.3 90 190.2 96 190.2 102 190.3 108 190.4 114 190.6 120 190.8 126 190.9 132 191.0 138 191.2 144 191.2 150 191.3 156 191.3 162 191.3 168 191.4 174 191.4 180 191.4 186 191.4 192 191.4 198 191.4 204 191.4 210 191.4 216 191.4 222 191.4 228 191.4 234 191.4 240 191.4 246 191.4 252 191.4 258 191.4 264 191.4 270 191.4 276 191.4 282 191.4 288 191.4 294 191.4 300 191.4 306 191.4 312 191.4 318 191.4 324 191.4 330 191.3 336 191.3 342 191.3 348 191.3 354 191.3 360 191.3 366 191.4 L366 194.5 360 194.5 354 194.5 348 194.5 342 194.5 336 194.5 330 194.5 324 194.5 318 194.5 312 194.5 306 194.5 300 194.5 294 194.5 288 194.5 282 194.5 276 194.5 270 194.5 264 194.5 258 194.5 252 194.5 246 194.5 240 194.5 234 194.5 228 194.5 222 194.5 216 194.5 210 194.5 204 194.5 198 194.5 192 194.5 186 194.5 180 194.5 174 194.5 168 194.5 162 194.5 156 194.5 150 194.6 144 194.6 138 194.7 132 194.8 126 195.0 120 195.1 114 195.3 108 195.5 102 195.6 96 195.7 90 195.7 84 195.6 78 195.5 72 195.3 66 195.3 60 195.3 54 195.3 48 195.5 42 195.6 36 195.6 30 195.6 24 195.6 18 195.5 12 195.4 6 195.3 0 195.2Z M0 196.3 6 196.3 12 196.3 18 196.2 24 196.2 30 196.2 36 196.3 42 196.3 48 196.3 54 196.3 60 196.2 66 196.1 72 195.8 78 195.6 84 195.5 90 195.5 96 195.5 102 195.6 108 196.0 114 196.3 120 196.6 126 196.7 132 196.8 138 196.9 144 196.9 150 196.9 156 196.9 162 196.9 168 196.9 174 196.9 180 196.9 186 196.9 192 196.9 198 196.9 204 196.9 210 196.9 216 196.9 222 196.9 228 196.9 234 196.9 240 196.9 246 196.9 252 196.9 258 196.9 264 196.9 270 196.9 276 196.9 282 196.9 288 196.9 294 196.9 300 196.9 306 196.9 312 196.9 318 196.9 324 196.9 330 196.8 336 196.8 342 196.8 348 196.8 354 196.8 360 196.8 366 196.9 L366 200.2 360 200.2 354 200.3 348 200.3 342 200.3 336 200.3 330 200.2 324 200.2 318 200.2 312 200.1 306 200.1 300 200.1 294 200.1 288 200.1 282 200.1 276 200.1 270 200.1 264 200.1 258 200.1 252 200.1 246 200.1 240 200.1 234 200.1 228 200.1 222 200.1 216 200.1 210 200.1 204 200.1 198 200.1 192 200.1 186 200.1 180 200.1 174 200.1 168 200.1 162 200.1 156 200.1 150 200.1 144 200.1 138 200.2 132 200.2 126 200.3 120 200.5 114 200.8 108 201.1 102 201.4 96 201.5 90 201.5 84 201.5 78 201.5 72 201.2 66 201.0 60 200.8 54 200.7 48 200.7 42 200.8 36 200.8 30 200.8 24 200.8 18 200.8 12 200.8 6 200.8 0 200.8Z M0 201.9 6 201.9 12 201.8 18 201.8 24 201.8 30 201.8 36 201.7 42 201.7 48 201.8 54 201.8 60 201.7 66 201.6 72 201.4 78 201.2 84 201.1 90 201.1 96 201.1 102 201.3 108 201.6 114 202.0 120 202.2 126 202.4 132 202.5 138 202.5 144 202.5 150 202.5 156 202.5 162 202.5 168 202.5 174 202.5 180 202.5 186 202.5 192 202.5 198 202.5 204 202.5 210 202.5 216 202.5 222 202.5 228 202.5 234 202.5 240 202.5 246 202.5 252 202.5 258 202.5 264 202.5 270 202.5 276 202.5 282 202.5 288 202.5 294 202.5 300 202.5 306 202.5 312 202.4 318 202.3 324 202.2 330 202.0 336 201.9 342 201.8 348 201.8 354 202.0 360 202.1 366 202.3 L366 206.0 360 206.1 354 206.3 348 206.4 342 206.4 336 206.4 330 206.2 324 206.1 318 205.9 312 205.8 306 205.8 300 205.7 294 205.7 288 205.7 282 205.7 276 205.7 270 205.7 264 205.7 258 205.7 252 205.7 246 205.7 240 205.7 234 205.7 228 205.7 222 205.7 216 205.7 210 205.7 204 205.7 198 205.7 192 205.7 186 205.7 180 205.7 174 205.7 168 205.7 162 205.7 156 205.7 150 205.7 144 205.7 138 205.7 132 205.8 126 205.9 120 206.0 114 206.3 108 206.6 102 206.9 96 207.1 90 207.1 84 207.1 78 207.1 72 206.9 66 206.7 60 206.5 54 206.5 48 206.5 42 206.5 36 206.5 30 206.5 24 206.5 18 206.4 12 206.4 6 206.4 0 206.4Z M0 207.4 6 207.4 12 207.3 18 207.2 24 207.1 30 207.0 36 206.9 42 206.9 48 207.0 54 207.1 60 207.2 66 207.2 72 207.3 78 207.2 84 207.2 90 207.3 96 207.3 102 207.5 108 207.7 114 207.8 120 208.0 126 208.0 132 208.1 138 208.1 144 208.1 150 208.1 156 208.1 162 208.1 168 208.1 174 208.1 180 208.1 186 208.1 192 208.1 198 208.1 204 208.1 210 208.1 216 208.1 222 208.1 228 208.1 234 208.1 240 208.1 246 208.1 252 208.1 258 208.1 264 208.1 270 208.1 276 208.1 282 208.1 288 208.1 294 208.1 300 208.1 306 208.0 312 207.9 318 207.8 324 207.5 330 207.2 336 207.0 342 206.8 348 206.9 354 207.1 360 207.4 366 207.7 L366 211.8 360 212.0 354 212.3 348 212.5 342 212.6 336 212.5 330 212.2 324 211.9 318 211.7 312 211.5 306 211.4 300 211.4 294 211.3 288 211.3 282 211.3 276 211.3 270 211.3 264 211.3 258 211.3 252 211.3 246 211.3 240 211.3 234 211.3 228 211.3 222 211.3 216 211.3 210 211.3 204 211.3 198 211.3 192 211.3 186 211.3 180 211.3 174 211.3 168 211.3 162 211.3 156 211.3 150 211.3 144 211.3 138 211.3 132 211.4 126 211.4 120 211.5 114 211.6 108 211.8 102 212.0 96 212.1 90 212.2 84 212.2 78 212.2 72 212.2 66 212.2 60 212.3 54 212.4 48 212.5 42 212.5 36 212.5 30 212.4 24 212.3 18 212.2 12 212.1 6 212.1 0 212.0Z M0 213.0 6 213.0 12 213.0 18 213.0 24 212.9 30 212.9 36 212.9 42 212.9 48 212.9 54 213.0 60 213.1 66 213.2 72 213.3 78 213.3 84 213.4 90 213.4 96 213.5 102 213.5 108 213.6 114 213.6 120 213.7 126 213.7 132 213.7 138 213.7 144 213.7 150 213.7 156 213.7 162 213.7 168 213.7 174 213.7 180 213.7 186 213.7 192 213.7 198 213.7 204 213.7 210 213.7 216 213.7 222 213.7 228 213.7 234 213.7 240 213.7 246 213.7 252 213.7 258 213.7 264 213.7 270 213.7 276 213.7 282 213.7 288 213.7 294 213.7 300 213.7 306 213.6 312 213.5 318 213.4 324 213.1 330 212.9 336 212.6 342 212.5 348 212.6 354 212.8 360 213.1 366 213.3 L366 217.3 360 217.6 354 217.8 348 218.0 342 218.1 336 218.0 330 217.8 324 217.5 318 217.3 312 217.1 306 217.0 300 217.0 294 216.9 288 216.9 282 216.9 276 216.9 270 216.9 264 216.9 258 216.9 252 216.9 246 216.9 240 216.9 234 216.9 228 217.0 222 217.0 216 217.0 210 217.0 204 217.0 198 217.0 192 217.0 186 217.0 180 217.0 174 217.0 168 217.0 162 217.0 156 217.0 150 216.9 144 216.9 138 216.9 132 217.0 126 217.0 120 217.0 114 217.0 108 217.1 102 217.1 96 217.2 90 217.2 84 217.3 78 217.3 72 217.4 66 217.4 60 217.5 54 217.6 48 217.7 42 217.8 36 217.8 30 217.8 24 217.7 18 217.7 12 217.7 6 217.6 0 217.6Z M0 218.6 6 218.6 12 218.6 18 218.6 24 218.7 30 218.7 36 218.7 42 218.8 48 218.8 54 218.9 60 219.0 66 219.0 72 219.1 78 219.1 84 219.2 90 219.2 96 219.2 102 219.3 108 219.3 114 219.3 120 219.3 126 219.3 132 219.3 138 219.3 144 219.2 150 219.2 156 219.2 162 219.1 168 219.1 174 219.0 180 219.0 186 218.9 192 218.9 198 218.9 204 218.9 210 219.0 216 219.0 222 219.1 228 219.1 234 219.2 240 219.2 246 219.2 252 219.3 258 219.3 264 219.3 270 219.3 276 219.3 282 219.3 288 219.3 294 219.3 300 219.3 306 219.2 312 219.1 318 218.9 324 218.7 330 218.4 336 218.2 342 218.2 348 218.4 354 218.6 360 218.9 366 219.1 L366 222.8 360 223.0 354 223.2 348 223.5 342 223.6 336 223.6 330 223.4 324 223.2 318 222.9 312 222.7 306 222.6 300 222.6 294 222.6 288 222.5 282 222.5 276 222.5 270 222.6 264 222.6 258 222.6 252 222.6 246 222.6 240 222.6 234 222.7 228 222.7 222 222.8 216 222.8 210 222.9 204 222.9 198 222.9 192 222.9 186 222.9 180 222.9 174 222.8 168 222.8 162 222.7 156 222.7 150 222.6 144 222.6 138 222.6 132 222.6 126 222.6 120 222.6 114 222.6 108 222.6 102 222.6 96 222.6 90 222.6 84 222.7 78 222.7 72 222.8 66 222.8 60 222.9 54 223.0 48 223.0 42 223.1 36 223.1 30 223.2 24 223.2 18 223.2 12 223.2 6 223.2 0 223.2Z M0 224.2 6 224.2 12 224.2 18 224.2 24 224.3 30 224.3 36 224.3 42 224.4 48 224.4 54 224.5 60 224.6 66 224.6 72 224.7 78 224.7 84 224.8 90 224.8 96 224.9 102 224.9 108 224.9 114 224.9 120 224.9 126 224.9 132 224.8 138 224.8 144 224.7 150 224.6 156 224.5 162 224.4 168 224.3 174 224.1 180 224.0 186 223.9 192 223.8 198 223.8 204 223.9 210 224.0 216 224.2 222 224.3 228 224.5 234 224.6 240 224.7 246 224.8 252 224.8 258 224.8 264 224.9 270 224.9 276 224.9 282 224.9 288 224.9 294 224.9 300 224.9 306 224.8 312 224.8 318 224.7 324 224.5 330 224.4 336 224.3 342 224.3 348 224.4 354 224.5 360 224.7 366 224.8 L366 228.3 360 228.4 354 228.5 348 228.7 342 228.8 336 228.8 330 228.7 324 228.5 318 228.4 312 228.3 306 228.2 300 228.2 294 228.2 288 228.2 282 228.2 276 228.2 270 228.2 264 228.2 258 228.2 252 228.2 246 228.3 240 228.4 234 228.5 228 228.6 222 228.7 216 228.9 210 229.0 204 229.1 198 229.2 192 229.2 186 229.2 180 229.1 174 228.9 168 228.8 162 228.6 156 228.5 150 228.4 144 228.3 138 228.3 132 228.2 126 228.2 120 228.2 114 228.2 108 228.2 102 228.2 96 228.2 90 228.2 84 228.2 78 228.3 72 228.4 66 228.4 60 228.5 54 228.5 48 228.6 42 228.7 36 228.7 30 228.7 24 228.8 18 228.8 12 228.8 6 228.8 0 228.8Z M0 229.8 6 229.8 12 229.8 18 229.9 24 229.9 30 229.9 36 229.9 42 230.0 48 230.0 54 230.1 60 230.2 66 230.2 72 230.3 78 230.3 84 230.4 90 230.4 96 230.4 102 230.4 108 230.5 114 230.4 120 230.4 126 230.4 132 230.4 138 230.4 144 230.3 150 230.3 156 230.2 162 230.1 168 230.0 174 229.9 180 229.8 186 229.7 192 229.7 198 229.7 204 229.7 210 229.8 216 229.9 222 230.0 228 230.2 234 230.2 240 230.3 246 230.4 252 230.4 258 230.4 264 230.5 270 230.5 276 230.5 282 230.5 288 230.5 294 230.5 300 230.5 306 230.5 312 230.5 318 230.4 324 230.4 330 230.4 336 230.4 342 230.4 348 230.4 354 230.4 360 230.4 366 230.5 L366 233.8 360 233.8 354 233.8 348 233.8 342 233.8 336 233.8 330 233.8 324 233.8 318 233.8 312 233.8 306 233.8 300 233.8 294 233.8 288 233.8 282 233.8 276 233.8 270 233.8 264 233.8 258 233.8 252 233.8 246 233.9 240 233.9 234 234.0 228 234.1 222 234.2 216 234.3 210 234.4 204 234.5 198 234.5 192 234.6 186 234.5 180 234.5 174 234.4 168 234.3 162 234.2 156 234.1 150 234.0 144 233.9 138 233.9 132 233.8 126 233.8 120 233.8 114 233.8 108 233.8 102 233.8 96 233.8 90 233.8 84 233.8 78 233.9 72 234.0 66 234.0 60 234.1 54 234.1 48 234.2 42 234.3 36 234.3 30 234.3 24 234.4 18 234.4 12 234.4 6 234.4 0 234.4Z M0 235.4 6 235.4 12 235.4 18 235.5 24 235.5 30 235.5 36 235.5 42 235.6 48 235.6 54 235.7 60 235.8 66 235.8 72 235.9 78 235.9 84 236.0 90 236.0 96 236.0 102 236.0 108 236.0 114 235.9 120 235.9 126 235.8 132 235.8 138 235.7 144 235.7 150 235.7 156 235.6 162 235.6 168 235.6 174 235.7 180 235.7 186 235.7 192 235.8 198 235.8 204 235.9 210 235.9 216 235.9 222 236.0 228 236.0 234 236.0 240 236.0 246 236.0 252 236.0 258 236.1 264 236.1 270 236.1 276 236.1 282 236.1 288 236.1 294 236.1 300 236.1 306 236.1 312 236.1 318 236.1 324 236.1 330 236.1 336 236.1 342 236.1 348 236.1 354 236.1 360 236.1 366 236.1 L366 239.4 360 239.4 354 239.4 348 239.4 342 239.4 336 239.4 330 239.4 324 239.4 318 239.4 312 239.4 306 239.4 300 239.4 294 239.4 288 239.4 282 239.4 276 239.4 270 239.4 264 239.4 258 239.4 252 239.4 246 239.4 240 239.4 234 239.4 228 239.4 222 239.5 216 239.5 210 239.5 204 239.6 198 239.6 192 239.7 186 239.7 180 239.7 174 239.8 168 239.8 162 239.8 156 239.8 150 239.8 144 239.7 138 239.7 132 239.6 126 239.6 120 239.5 114 239.5 108 239.5 102 239.4 96 239.4 90 239.4 84 239.5 78 239.5 72 239.6 66 239.6 60 239.7 54 239.7 48 239.8 42 239.8 36 239.9 30 239.9 24 240.0 18 240.0 12 240.0 6 240.0 0 240.0Z M0 241.0 6 241.0 12 241.1 18 241.1 24 241.1 30 241.1 36 241.2 42 241.2 48 241.3 54 241.3 60 241.4 66 241.4 72 241.5 78 241.5 84 241.6 90 241.6 96 241.5 102 241.5 108 241.4 114 241.3 120 241.2 126 241.1 132 240.9 138 240.8 144 240.7 150 240.6 156 240.6 162 240.7 168 240.7 174 240.9 180 241.0 186 241.2 192 241.3 198 241.4 204 241.5 210 241.5 216 241.6 222 241.6 228 241.6 234 241.6 240 241.6 246 241.6 252 241.6 258 241.6 264 241.6 270 241.6 276 241.6 282 241.6 288 241.6 294 241.6 300 241.6 306 241.6 312 241.6 318 241.6 324 241.6 330 241.6 336 241.6 342 241.6 348 241.6 354 241.6 360 241.6 366 241.6 L366 245.0 360 245.0 354 245.0 348 245.0 342 245.0 336 245.0 330 245.0 324 245.0 318 245.0 312 245.0 306 245.0 300 245.0 294 245.0 288 245.0 282 245.0 276 245.0 270 245.0 264 245.0 258 245.0 252 245.0 246 245.0 240 245.0 234 245.0 228 245.0 222 245.0 216 245.0 210 245.1 204 245.1 198 245.2 192 245.3 186 245.5 180 245.6 174 245.8 168 245.9 162 246.0 156 246.0 150 246.0 144 246.0 138 245.8 132 245.7 126 245.6 120 245.4 114 245.3 108 245.2 102 245.1 96 245.1 90 245.1 84 245.1 78 245.1 72 245.2 66 245.2 60 245.3 54 245.3 48 245.4 42 245.4 36 245.5 30 245.5 24 245.5 18 245.6 12 245.6 6 245.6 0 245.6Z M0 246.6 6 246.7 12 246.7 18 246.7 24 246.7 30 246.7 36 246.8 42 246.8 48 246.9 54 246.9 60 247.0 66 247.0 72 247.1 78 247.1 84 247.1 90 247.1 96 247.1 102 247.0 108 246.9 114 246.8 120 246.6 126 246.5 132 246.4 138 246.3 144 246.2 150 246.2 156 246.3 162 246.4 168 246.5 174 246.6 180 246.7 186 246.9 192 247.0 198 247.0 204 247.1 210 247.1 216 247.1 222 247.1 228 247.1 234 247.1 240 247.0 246 246.9 252 246.9 258 246.8 264 246.7 270 246.7 276 246.7 282 246.8 288 246.8 294 246.9 300 247.0 306 247.0 312 247.1 318 247.1 324 247.2 330 247.2 336 247.2 342 247.2 348 247.2 354 247.2 360 247.2 366 247.2 L366 250.6 360 250.6 354 250.6 348 250.6 342 250.6 336 250.6 330 250.6 324 250.7 318 250.7 312 250.7 306 250.8 300 250.9 294 250.9 288 251.0 282 251.1 276 251.1 270 251.1 264 251.1 258 251.0 252 251.0 246 250.9 240 250.8 234 250.8 228 250.7 222 250.7 216 250.7 210 250.7 204 250.7 198 250.8 192 250.9 186 251.0 180 251.1 174 251.2 168 251.3 162 251.5 156 251.5 150 251.6 144 251.6 138 251.5 132 251.5 126 251.3 120 251.2 114 251.1 108 250.9 102 250.8 96 250.8 90 250.7 84 250.7 78 250.7 72 250.8 66 250.8 60 250.9 54 250.9 48 251.0 42 251.0 36 251.1 30 251.1 24 251.1 18 251.1 12 251.2 6 251.2 0 251.2Z M0 252.3 6 252.3 12 252.3 18 252.3 24 252.3 30 252.3 36 252.4 42 252.4 48 252.5 54 252.5 60 252.6 66 252.6 72 252.6 78 252.7 84 252.7 90 252.6 96 252.5 102 252.4 108 252.3 114 252.1 120 251.9 126 251.8 132 251.8 138 251.8 144 251.9 150 252.1 156 252.2 162 252.4 168 252.5 174 252.6 180 252.7 186 252.7 192 252.7 198 252.8 204 252.8 210 252.7 216 252.7 222 252.7 228 252.6 234 252.5 240 252.3 246 252.2 252 252.0 258 251.9 264 251.8 270 251.7 276 251.7 282 251.8 288 251.9 294 252.1 300 252.2 306 252.4 312 252.5 318 252.6 324 252.7 330 252.7 336 252.8 342 252.8 348 252.8 354 252.8 360 252.8 366 252.8 L366 256.2 360 256.2 354 256.2 348 256.2 342 256.2 336 256.2 330 256.3 324 256.3 318 256.4 312 256.5 306 256.6 300 256.8 294 257.0 288 257.1 282 257.2 276 257.3 270 257.3 264 257.2 258 257.1 252 257.0 246 256.8 240 256.7 234 256.6 228 256.4 222 256.4 216 256.3 210 256.3 204 256.3 198 256.3 192 256.3 186 256.3 180 256.4 174 256.4 168 256.5 162 256.7 156 256.8 150 256.9 144 257.1 138 257.2 132 257.2 126 257.2 120 257.1 114 256.9 108 256.8 102 256.6 96 256.5 90 256.4 84 256.3 78 256.3 72 256.4 66 256.4 60 256.5 54 256.5 48 256.5 42 256.6 36 256.6 30 256.7 24 256.7 18 256.7 12 256.7 6 256.8 0 256.8Z M0 257.9 6 257.9 12 257.9 18 257.9 24 257.9 30 258.0 36 258.0 42 258.0 48 258.1 54 258.1 60 258.2 66 258.2 72 258.3 78 258.3 84 258.3 90 258.4 96 258.3 102 258.3 108 258.3 114 258.2 120 258.2 126 258.2 132 258.2 138 258.2 144 258.2 150 258.3 156 258.3 162 258.3 168 258.4 174 258.4 180 258.4 186 258.4 192 258.4 198 258.4 204 258.4 210 258.4 216 258.3 222 258.3 228 258.3 234 258.2 240 258.1 246 258.0 252 257.9 258 257.9 264 257.8 270 257.8 276 257.8 282 257.8 288 257.9 294 258.0 300 258.1 306 258.1 312 258.2 318 258.3 324 258.3 330 258.4 336 258.4 342 258.4 348 258.4 354 258.4 360 258.4 366 258.4 L366 261.8 360 261.8 354 261.8 348 261.8 342 261.8 336 261.8 330 261.9 324 261.9 318 261.9 312 262.0 306 262.1 300 262.2 294 262.3 288 262.3 282 262.4 276 262.4 270 262.5 264 262.4 258 262.4 252 262.3 246 262.2 240 262.1 234 262.0 228 262.0 222 261.9 216 261.9 210 261.8 204 261.8 198 261.8 192 261.8 186 261.8 180 261.8 174 261.8 168 261.9 162 261.9 156 261.9 150 261.9 144 262.0 138 262.0 132 262.0 126 262.0 120 262.0 114 262.0 108 261.9 102 261.9 96 261.9 90 261.9 84 261.9 78 261.9 72 262.0 66 262.0 60 262.0 54 262.1 48 262.1 42 262.2 36 262.2 30 262.3 24 262.3 18 262.3 12 262.3 6 262.3 0 262.4Z"/></svg>

<!-- stroke panel -->
<div class="a" style="left:705px;top:112px;width:264px;height:382px;background:#434343;border:1px solid #272727;border-radius:3px;box-shadow:0 0 6px rgba(0,0,0,.25)"></div>
<div class="a" style="left:706px;top:113px;width:262px;height:24px;background:#3a3a3a;border-radius:2px 2px 0 0"></div>
<div class="a" style="left:706px;top:137px;width:262px;height:2px;background:#575757"></div>
<div class="a" style="left:748px;top:116px;width:61px;height:23px;background:#434343;border:1px solid #5a5a5a;border-bottom:none"></div>
<!-- close -->
<svg class="a" style="left:708px;top:118px" width="16" height="16" viewBox="0 0 16 16"><circle cx="7.8" cy="8" r="6.3" fill="#ababab"/><path d="M5.3 5.5L10.3 10.5M10.3 5.5L5.3 10.5" stroke="#1c1c1c" stroke-width="1.3"/></svg>
<svg class="a" style="left:724px;top:119px" width="12" height="14" viewBox="0 0 12 14"><path d="M1.5 2.5L4.5 7L1.5 11.5M5 2.5L8 7L5 11.5" stroke="#8c8c8c" stroke-width="1.1" fill="none"/></svg>
<div class="a" style="left:738px;top:119px;width:1.6px;height:15px;background:#8a8a8a"></div>
<div class="a" style="left:742.5px;top:119px;width:1.6px;height:15px;background:#8a8a8a"></div>
<svg class="a" style="left:752px;top:122px" width="8" height="11" viewBox="0 0 8 11"><path d="M1 4L4 1L7 4M1 6.5L4 9.5L7 6.5" stroke="#b0b0b0" stroke-width="1.1" fill="none"/></svg>
<div class="t pl" style="left:763px;top:121.8px">Stroke</div>
<svg class="a" style="left:944px;top:119px" width="15" height="14" viewBox="0 0 15 14"><path d="M1 1.5H14M1 5.2H14M1 8.9H14M1 12.6H14" stroke="#cacaca" stroke-width="1.5"/></svg>

<!-- width row -->
<div class="t pl" style="left:737.5px;top:152.6px">Width</div>
<div class="inp" style="left:777px;top:148px;width:80px;height:20px"></div>
<div class="t pl" style="left:781px;top:152.6px;color:#d0d0d0">0.159 in</div>
<div class="spin" style="left:857px;top:148px;width:14px;height:20px"></div>
<svg class="a" style="left:857px;top:148px" width="14" height="20" viewBox="0 0 14 20"><path d="M3 7.5L7 3.5L11 7.5M3 12.5L7 16.5L11 12.5" stroke="#bdbdbd" stroke-width="1.1" fill="none"/></svg>
<div class="spin" style="left:872px;top:148px;width:16px;height:20px;background:#575757"></div>
<svg class="a" style="left:872px;top:148px" width="16" height="20" viewBox="0 0 16 20"><path d="M4.5 8.5H11.5L8 12.5Z" fill="#6c6c6c"/></svg>

<!-- align row -->
<div class="t pl" style="left:742.5px;top:182.6px">Align</div>
<div class="inp" style="left:777px;top:178px;width:76px;height:20px"></div>
<div class="t pl" style="left:781px;top:182.6px;color:#d0d0d0">0%</div>
<div class="spin" style="left:853px;top:178px;width:14px;height:20px"></div>
<svg class="a" style="left:853px;top:178px" width="14" height="20" viewBox="0 0 14 20"><path d="M3 7.5L7 3.5L11 7.5M3 12.5L7 16.5L11 12.5" stroke="#bdbdbd" stroke-width="1.1" fill="none"/></svg>
<svg class="a" style="left:875px;top:172px" width="80" height="60" viewBox="875 172 80 60">
<path d="M882 183.2H892V193H886.2V188.3H882Z" fill="#b6b6b6"/>
<circle cx="891.6" cy="183.3" r="1.9" fill="#8a8a8a" stroke="#b6b6b6" stroke-width="0.8"/>
<path d="M935.2 180.7H948.3V193.8H941.6V187.2H935.2Z" fill="#b6b6b6"/>
<rect x="940.3" y="185.9" width="2.8" height="2.8" fill="#6a6a6a" stroke="#3c3c3c" stroke-width="0.6"/>
</svg>
<div class="a" style="left:904px;top:176px;width:22px;height:22px;border-radius:3px;background:radial-gradient(circle at 40% 55%,#4890cc,#3a7ab4 75%)"></div>
<svg class="a" style="left:875px;top:172px" width="80" height="60" viewBox="875 172 80 60">
<path d="M909 181.5H920.1V193H913.8V186.6H909Z" fill="#b3b3b3"/>
<path d="M909 184.4H916.5M917.2 185.5V193" stroke="#3d3d3d" stroke-width="1"/>
<rect x="915.6" y="183" width="3" height="3" fill="#777" stroke="#2d2d2d" stroke-width="0.8"/>
</svg>
<!-- miter row -->
<div class="cb" style="left:722px;top:210.5px;width:15px;height:15px"></div>
<div class="t pl" style="left:742.5px;top:212.9px">Miter</div>
<div class="inp" style="left:777px;top:208px;width:76px;height:20px"></div>
<div class="t pl" style="left:781px;top:212.9px;color:#d0d0d0">15°</div>
<div class="spin" style="left:853px;top:208px;width:15px;height:19px"></div>
<svg class="a" style="left:853px;top:208px" width="15" height="19" viewBox="0 0 15 19"><path d="M3.8 7.5H11.2L7.5 3Z M3.8 11.5H11.2L7.5 16Z" fill="#e0e0e0"/></svg>
<div class="a" style="left:877px;top:206px;width:22px;height:22px;border-radius:3px;background:radial-gradient(circle at 50% 50%,#4890cc,#3a7ab4 75%)"></div>
<svg class="a" style="left:875px;top:200px" width="80" height="32" viewBox="875 200 80 32">
<path d="M883 212H893V222H887.5V217.5H883Z" fill="#a89f94"/>
<path d="M883 214.6H887" stroke="#7f8a96" stroke-width="1"/>
<circle cx="888.3" cy="215.8" r="1.7" fill="none" stroke="#5fb4ff" stroke-width="1"/>
<path d="M888.3 217.5V222" stroke="#5fb4ff" stroke-width="0.9"/>
<path d="M906.7 208.8H915.5Q922.9 208.8 922.9 216.2V225H911.5V219.6H906.7Z" fill="#b6b6b6"/>
<path d="M906.7 215.5H914.2M916 217.6V225" stroke="#2c2c2c" stroke-width="1.1"/>
<rect x="914.2" y="213.6" width="3.8" height="3.8" fill="#d8d8d8" stroke="#2c2c2c" stroke-width="1.1"/>
<path d="M933.6 208.8H941.3L949.9 216.8V225H938V219.6H933.6Z" fill="#b6b6b6"/>
<path d="M933.6 217H940M941.5 218.5V225" stroke="#555" stroke-width="0.9"/>
<circle cx="941.5" cy="217" r="1.5" fill="#b6b6b6" stroke="#555" stroke-width="0.9"/>
</svg>

<div class="a" style="left:716px;top:239px;width:237px;height:1px;background:#343434"></div>

<!-- cap row -->
<div class="t pl" style="left:748.5px;top:259.1px">Cap</div>
<div class="dd" style="left:777px;top:250px;width:80px;height:29px"></div>
<div class="a" style="left:807px;top:257px;width:24.5px;height:7px;background:#dcdcdc"></div>
<div class="a" style="left:807px;top:266px;width:24.5px;height:7px;background:#dcdcdc"></div>
<div class="a" style="left:805.5px;top:263.5px;width:4px;height:4px;background:#111"></div>
<div class="a" style="left:807px;top:264.6px;width:24px;height:1.2px;background:#333"></div>
<svg class="a" style="left:836px;top:260px" width="16" height="11" viewBox="0 0 16 11"><path d="M1.5 2L8 9L14.5 2" stroke="#8a8a8a" stroke-width="1.3" fill="none"/></svg>
<div class="sb" style="left:858px;top:251.5px;width:13.5px;height:12.5px"></div>
<div class="sb" style="left:858px;top:266px;width:13.5px;height:13px"></div>
<svg class="a" style="left:858px;top:251.5px" width="14" height="28" viewBox="0 0 14 28"><path d="M5.5 3.5L8.5 6.5L5.5 9.5M8.5 17.5L5.5 20.5L8.5 23.5" stroke="#aaaaaa" stroke-width="1" fill="none"/></svg>
<div class="dd" style="left:873px;top:250px;width:80px;height:29px"></div>
<div class="a" style="left:879px;top:257px;width:24.5px;height:7px;background:#dcdcdc"></div>
<div class="a" style="left:879px;top:266px;width:24.5px;height:7px;background:#dcdcdc"></div>
<div class="a" style="left:902.5px;top:263.5px;width:4px;height:4px;background:#111"></div>
<div class="a" style="left:879px;top:264.6px;width:24px;height:1.2px;background:#333"></div>
<svg class="a" style="left:932px;top:260px" width="16" height="11" viewBox="0 0 16 11"><path d="M1.5 2L8 9L14.5 2" stroke="#8a8a8a" stroke-width="1.3" fill="none"/></svg>

<!-- arrow row -->
<div class="t pl" style="left:737.5px;top:299.3px">Arrow</div>
<div class="dd" style="left:777px;top:290px;width:80px;height:29px"></div>
<div class="a" style="left:803px;top:304px;width:28px;height:2.4px;background:#e8e8e8"></div>
<svg class="a" style="left:836px;top:300px" width="16" height="11" viewBox="0 0 16 11"><path d="M1.5 2L8 9L14.5 2" stroke="#8a8a8a" stroke-width="1.3" fill="none"/></svg>
<div class="sb" style="left:858px;top:291.5px;width:13.5px;height:12.5px"></div>
<div class="sb" style="left:858px;top:306px;width:13.5px;height:13px"></div>
<svg class="a" style="left:858px;top:291.5px" width="14" height="28" viewBox="0 0 14 28"><path d="M5.5 3.5L8.5 6.5L5.5 9.5M8.5 17.5L5.5 20.5L8.5 23.5" stroke="#aaaaaa" stroke-width="1" fill="none"/></svg>
<div class="dd" style="left:873px;top:290px;width:80px;height:29px"></div>
<div class="a" style="left:880px;top:304px;width:28px;height:2.4px;background:#e8e8e8"></div>
<svg class="a" style="left:932px;top:300px" width="16" height="11" viewBox="0 0 16 11"><path d="M1.5 2L8 9L14.5 2" stroke="#8a8a8a" stroke-width="1.3" fill="none"/></svg>

<div class="a" style="left:716px;top:331px;width:237px;height:1px;background:#343434"></div>

<!-- dash -->
<div class="t pl" style="left:716.5px;top:345.5px">Dash</div>
<div class="dd" style="left:716px;top:362px;width:209px;height:24px"></div>
<div class="a" style="left:732px;top:373.3px;width:157px;height:2.6px;background:#eaeaea"></div>
<svg class="a" style="left:904px;top:369px" width="16" height="11" viewBox="0 0 16 11"><path d="M1.5 2L8 9L14.5 2" stroke="#8a8a8a" stroke-width="1.3" fill="none"/></svg>
<div class="a" style="left:929px;top:362.5px;width:24px;height:24px;background:#5d5d5d;border:1px solid #626262;border-radius:2px"></div>
<svg class="a" style="left:929px;top:362px" width="24" height="24" viewBox="0 0 24 24"><g stroke="#ababab" stroke-width="0.9" fill="#5d5d5d"><path d="M4 7.3H19.1M4 12.5H19.1M4 17.8H19.1"/><circle cx="8.2" cy="7.3" r="2"/><path d="M15.5 10.2L17.8 12.5L15.5 14.8L13.2 12.5Z"/><circle cx="10.7" cy="17.8" r="2"/></g></svg>

<!-- profile -->
<div class="t pl" style="left:716.5px;top:400.5px">Profile</div>
<div class="dd" style="left:716px;top:417px;width:209px;height:24px"></div>
<svg class="a" style="left:705px;top:415px" width="200" height="30" viewBox="705 415 200 30"><path d="M728.7 424.90 737.0 424.90 741.0 424.60 745.0 423.30 750.0 422.10 753.5 421.80 757.0 422.20 761.0 423.90 764.0 425.40 770.0 425.80 790.0 426.30 810.0 426.75 830.0 426.95 836.0 426.90 840.0 426.10 843.0 425.30 846.0 425.00 849.0 425.30 852.0 426.20 855.0 427.10 858.0 427.50 861.0 427.20 865.0 426.00 868.0 425.40 871.5 425.30 875.0 425.50 879.0 426.10 883.0 426.50 886.0 426.50 890.0 426.20 893.0 426.00 L893.0 433.00 890.0 432.80 886.0 432.50 883.0 432.50 879.0 432.90 875.0 433.50 871.5 433.70 868.0 433.60 865.0 433.00 861.0 431.80 858.0 431.50 855.0 431.90 852.0 432.80 849.0 433.70 846.0 434.00 843.0 433.70 840.0 432.90 836.0 432.10 830.0 432.05 810.0 432.25 790.0 432.70 770.0 433.20 764.0 433.60 761.0 435.10 757.0 436.80 753.5 437.20 750.0 436.90 745.0 435.70 741.0 434.40 737.0 434.10 728.7 434.10Z" fill="#e4e4e4" stroke="#e4e4e4" stroke-width="0.3" stroke-linejoin="round"/></svg>
<svg class="a" style="left:904px;top:424px" width="16" height="11" viewBox="0 0 16 11"><path d="M1.5 2L8 9L14.5 2" stroke="#8a8a8a" stroke-width="1.3" fill="none"/></svg>
<div class="a" style="left:929px;top:417.5px;width:24px;height:24px;background:#5d5d5d;border:1px solid #626262;border-radius:2px"></div>
<svg class="a" style="left:929px;top:417px" width="24" height="24" viewBox="0 0 24 24"><g stroke="#ababab" stroke-width="0.9" fill="#5d5d5d"><path d="M4 7.3H19.1M4 12.5H19.1M4 17.8H19.1"/><circle cx="8.2" cy="7.3" r="2"/><path d="M15.5 10.2L17.8 12.5L15.5 14.8L13.2 12.5Z"/><circle cx="10.7" cy="17.8" r="2"/></g></svg>

<div class="a" style="left:716px;top:452.5px;width:237px;height:1px;background:#343434"></div>

<!-- toolbar -->
<svg class="a" style="left:705px;top:460px" width="264" height="28" viewBox="705 460 264 28">
<g stroke="#a6a6a6" stroke-width="1.2" fill="none">
<path d="M711.5 468.5H726.5M711.5 474.3H726.5M711.5 480H726.5"/>
<circle cx="716" cy="468.5" r="1.6" fill="#434343"/><circle cx="722.5" cy="474.3" r="1.6" fill="#434343"/><circle cx="718" cy="480" r="1.6" fill="#434343"/>
</g>
<g stroke="#a3a3a3" stroke-width="1.9" fill="none">
<path d="M740.2 471.6 A7.6 7.6 0 0 1 746.2 466.4"/>
<path d="M750.8 467.3 A7.6 7.6 0 0 1 751.4 480.4"/>
<path d="M745.9 481.5 A7.6 7.6 0 0 1 740.2 476.3"/>
<path d="M742.6 474.4 A4.6 4.6 0 0 1 747.1 469.5"/>
<path d="M746.9 478.4 A4.6 4.6 0 0 0 751.6 472.9"/>
</g>
<g fill="none" stroke="#a6a6a6" stroke-width="2" stroke-linecap="round" transform="translate(765.4 464.4) scale(0.85)"><path d="M10 13a5 5 0 0 0 7.54.54l3-3a5 5 0 0 0-7.07-7.07l-1.72 1.71"/><path d="M14 11a5 5 0 0 0-7.54-.54l-3 3a5 5 0 0 0 7.07 7.07l1.71-1.71"/></g>
<rect x="795.7" y="467.6" width="14.6" height="12.8" rx="1" fill="none" stroke="#7f7f7f" stroke-width="1.1"/>
<path d="M798.7 469.8 L807.4 472.8 L804.2 474.6 L806.3 476.8 L805.3 477.8 L803.2 475.6 L801.4 478.2Z" fill="#a3a3a3"/>
<g stroke="#a0a0a0" stroke-width="1.6" fill="none">
<rect x="825.4" y="468.4" width="10.9" height="10.9"/>
<circle cx="825.4" cy="468.4" r="1.8" fill="#434343"/><circle cx="836.3" cy="468.4" r="1.8" fill="#434343"/><circle cx="825.4" cy="479.3" r="1.8" fill="#434343"/><circle cx="836.3" cy="479.3" r="1.8" fill="#434343"/>
</g>
<path d="M850.7 472.3 C853 470.3 856 470 859 473.2 C861.5 475.7 864.5 476.5 867 473.6" stroke="#a6a6a6" stroke-width="2.8" fill="none" stroke-linecap="round"/>
<g stroke="#a6a6a6" stroke-width="1.3" fill="none">
<circle cx="886.9" cy="473.9" r="8.6"/></g>
<path d="M886.8 469V479M882 473.9H891.8" stroke="#a6a6a6" stroke-width="1.7"/>
<rect x="907.6" y="468.5" width="14.3" height="10.7" fill="none" stroke="#a6a6a6" stroke-width="3.3"/>
<g stroke="#a6a6a6" stroke-width="1.2" fill="none">
<path d="M935.2 468.3H950.8M940.5 468V466.2Q940.5 465.4 941.3 465.4H945.3Q946.1 465.4 946.1 466.2V468"/>
<path d="M936.6 469L937.8 481.2Q938 482.2 939 482.2H946.7Q947.7 482.2 947.9 481.2L949 469"/>
<path d="M940.2 471V480M942.8 471V480M945.4 471V480"/>
</g>
</svg>


<!-- dialog -->
<div class="a" style="left:99px;top:455px;width:523px;height:16px;background:linear-gradient(rgba(0,0,0,0),rgba(0,0,0,.09))"></div>
<div class="a" style="left:99px;top:471px;width:523px;height:1px;background:#fafafa"></div>
<div class="a" style="left:5px;top:472px;width:691px;height:361px;background:#424242;border:1px solid #2a2a2a;border-radius:2px;box-shadow:0 2px 6px 0 rgba(0,0,0,.25)"></div>
<div class="a" style="left:6px;top:473px;width:689px;height:19px;background:linear-gradient(#454545,#3c3c3c)"></div>
<div class="a" style="left:6px;top:492px;width:689px;height:1px;background:#363636"></div>
<div class="t dl" style="left:290.5px;top:477.3px;font-size:12.7px">Width Brush Options</div>

<div class="t dl" style="left:64.5px;top:528.4px">Presets</div>
<div class="a" style="left:112px;top:523px;width:228px;height:20px;border-radius:3px;background:linear-gradient(#6c6c6c,#656565)"></div>
<div class="t dl" style="left:118.5px;top:527.9px;color:#f2f2f2">Custom</div>
<svg class="a" style="left:322px;top:528px" width="15" height="10" viewBox="0 0 15 10"><path d="M1.5 2L7.5 8L13.5 2" stroke="#f2f2f2" stroke-width="2" fill="none"/></svg>

<div class="t dl" style="left:24.5px;top:559.5px">Brush Shape</div>
<div class="grp" style="left:24px;top:577px;width:318px;height:197px"></div>
<div class="t dl" style="left:41.4px;top:599.3px">Size</div>
<div class="vb" style="left:275px;top:590px;width:60px;height:19.5px"></div>
<div class="t dl" style="left:279.5px;top:594.7px">0.333 in</div>
<div class="track" style="left:42px;top:618px;width:289px"></div>
<div class="thumb" style="left:36px;top:614px"></div>

<div class="t dl" style="left:74.3px;top:648.2px">Scale</div>
<div class="vb" style="left:111px;top:643px;width:60.5px;height:19.5px"></div>
<div class="t dl" style="left:115.5px;top:648.2px">100%</div>
<div class="spin" style="left:172px;top:643px;width:13.5px;height:19.5px;background:#5e5e5e"></div>
<svg class="a" style="left:172px;top:643px" width="14" height="20" viewBox="0 0 14 20"><path d="M2.8 7.9L6.9 3.7L11 7.9M2.8 10.6L6.9 14.8L11 10.6" stroke="#ececec" stroke-width="1.5" fill="none"/></svg>
<div class="t dl" style="left:72.8px;top:683.2px">Angle</div>
<div class="vb" style="left:111px;top:678px;width:60.5px;height:19.5px"></div>
<div class="t dl" style="left:115.5px;top:683.2px">0°</div>
<div class="spin" style="left:172px;top:678px;width:13.5px;height:19.5px;background:#5e5e5e"></div>
<svg class="a" style="left:172px;top:678px" width="14" height="20" viewBox="0 0 14 20"><path d="M2.8 7.9L6.9 3.7L11 7.9M2.8 10.6L6.9 14.8L11 10.6" stroke="#ececec" stroke-width="1.5" fill="none"/></svg>
<div class="t dl" style="left:61.8px;top:716.9px">Change</div>
<div class="vb" style="left:111px;top:713px;width:79px;height:19.5px"></div>
<div class="t dl" style="left:115.5px;top:717.0px">0.014 in</div>

<svg class="a" style="left:205px;top:637px" width="121" height="121" viewBox="0 0 121 121">
<rect x="1" y="1" width="119" height="119" fill="#535353" stroke="#8a8a8a" stroke-width="1"/>
<g stroke="#a8a8a8" stroke-width="1">
<path d="M15.9 1V120M30.8 1V120M45.6 1V120M75.4 1V120M90.3 1V120M105.1 1V120"/>
<path d="M1 15.9H120M1 30.8H120M1 45.6H120M1 75.4H120M1 90.3H120M1 105.1H120"/>
</g>
<circle cx="60.3" cy="60.5" r="14.7" fill="#c2c2c2"/>
<path d="M60.3 1V120M1 60.5H120" stroke="#d2d2d2" stroke-width="1.3"/>
</svg>

<div class="t dl" style="left:359.5px;top:520.4px">Painting</div>
<div class="grp" style="left:358px;top:537px;width:318px;height:237px"></div>
<div class="t dl" style="left:376.3px;top:549.2px">Hardness</div>
<div class="vb" style="left:589.5px;top:539.5px;width:60.5px;height:19.5px"></div>
<div class="t dl" style="left:594.3px;top:545.1px">0%</div>
<div class="t dl" style="left:653.8px;top:545.1px">%</div>
<div class="track" style="left:370px;top:568px;width:296px"></div>
<div class="thumb" style="left:370px;top:563.5px"></div>

<div class="t dl" style="left:376.3px;top:597.5px">Adjustment</div>
<div class="vb" style="left:610.5px;top:590px;width:59px;height:20px"></div>
<div class="t dl" style="left:614.2px;top:594.5px">0.028 in</div>
<div class="track" style="left:370px;top:618px;width:296px"></div>
<div class="thumb" style="left:513.5px;top:614px"></div>

<div class="t dl" style="left:376.3px;top:649.7px">Fidelity</div>
<div class="vb" style="left:589.5px;top:640.5px;width:60.5px;height:19.5px"></div>
<div class="t dl" style="left:594.3px;top:644.9px">0.014 in</div>
<div class="t dl" style="left:653.8px;top:644.9px">%</div>
<div class="track" style="left:370px;top:668px;width:296px"></div>
<div class="thumb" style="left:398px;top:664px"></div>

<div class="t dl" style="left:398px;top:702.7px">Precision</div>
<div class="vb" style="left:456.5px;top:698px;width:56px;height:19.5px"></div>
<div class="t dl" style="left:460px;top:702.7px">10</div>
<div class="spin" style="left:512.5px;top:698px;width:14px;height:19.5px;background:#5e5e5e"></div>
<svg class="a" style="left:512.5px;top:698px" width="14" height="20" viewBox="0 0 14 20"><path d="M3.6 8.2H10.4L7 3.8Z M3.6 11.8H10.4L7 16.2Z" fill="#e2e2e2"/></svg>
<div class="t dl" style="left:531.3px;top:702.7px">pix</div>
<div class="cb" style="left:456px;top:741px;width:14.5px;height:14px"></div>
<div class="t dl" style="left:474.3px;top:741.7px">Scale Width</div>

<div class="cb" style="left:140.5px;top:795px"></div>
<div class="t dl" style="left:159.2px;top:797.4px">Selection Only</div>
<div class="cb" style="left:270.7px;top:795px"></div>
<div class="t dl" style="left:289.8px;top:797.4px">Active Stroke</div>

<div class="a" style="left:455px;top:793px;width:100px;height:20px;border-radius:3px;background:linear-gradient(#6f6f6f,#646464);box-shadow:0 1px 1px rgba(0,0,0,.25)"></div>
<div class="t dl" style="left:455px;top:797.1px;width:100px;text-align:center;color:#ededed">Cancel</div>
<div class="a" style="left:575px;top:793px;width:100px;height:20px;border-radius:3px;background:linear-gradient(#3f7ce0,#3268d2);box-shadow:0 1px 1px rgba(0,0,0,.25)"></div>
<div class="t dl" style="left:575px;top:797.1px;width:100px;text-align:center;color:#f4f4f4">Ok</div>

<svg class="a" style="left:360px;top:773px" width="104" height="60" viewBox="360 773 104 60"><ellipse cx="411.3" cy="802.3" rx="44.6" ry="23" fill="none" stroke="#ee2c3c" stroke-width="3.3"/></svg>

</body></html>
